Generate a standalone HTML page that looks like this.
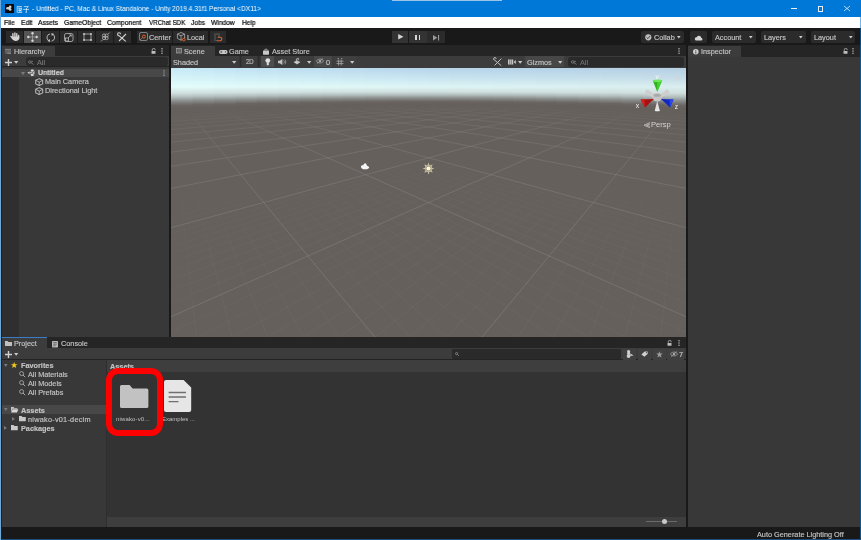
<!DOCTYPE html>
<html><head><meta charset="utf-8">
<style>
*{margin:0;padding:0;box-sizing:border-box}
html,body{width:861px;height:540px;overflow:hidden;background:#191919}
body{position:relative;font-family:"Liberation Sans",sans-serif}
.a{position:absolute}
.t{position:absolute;white-space:nowrap;line-height:1;font-size:7.3px;color:#c4c4c4;will-change:transform;-webkit-text-stroke:0.15px currentColor}
.b{font-weight:bold}
.m{font-size:7px;color:#000;transform-origin:0 0;transform:scaleX(0.95);-webkit-text-stroke:0.2px #000}
svg{position:absolute;overflow:visible}
</style></head><body>

<!-- title bar -->
<div class="a" style="left:0;top:0;width:861px;height:17px;background:#0078d7"></div>
<div class="a" style="left:392px;top:0;width:110px;height:1px;background:#9cc3ea"></div>
<div class="a" style="left:5.1px;top:4.3px;width:8.6px;height:8.3px;background:#080808"></div>
<svg style="left:5.1px;top:4.3px" width="8.6" height="8.3" viewBox="0 0 8.6 8.3"><g fill="#cfcfcf"><circle cx="2.5" cy="4.2" r="1.3"/><circle cx="5.2" cy="2.9" r="1.3"/><circle cx="5.2" cy="5.5" r="1.3"/><path d="M2.5 3.4 L5.2 2 L5.8 4.2 L5.2 6.4 L2.5 5Z"/></g></svg>
<!-- CJK chars drawn -->
<svg style="left:16px;top:5.5px" width="14" height="7" viewBox="0 0 14 7"><g fill="none" stroke="#fff" stroke-width="0.65"><path d="M1 0.6H6M1.2 0.6V6.6M2 2.2H5.6V4.2H2M3.8 2.2V6.2M1.6 6.4H6.2M4 4.2L5.6 5.4"/><path d="M7.8 0.6H12.4L10.4 2.4V6.6L9.4 6.2M7.2 3.4H13"/></g></svg>
<div class="t" style="left:32.2px;top:5px;font-size:7px;color:#fff;-webkit-text-stroke:0;transform-origin:0 0;transform:scaleX(0.948)">- Untitled - PC, Mac &amp; Linux Standalone - Unity 2019.4.31f1 Personal &lt;DX11&gt;</div>
<div class="a" style="left:791px;top:8.2px;width:6px;height:0.8px;background:#f2f2f2"></div>
<div class="a" style="left:817.6px;top:5.8px;width:5.3px;height:5.8px;border:0.7px solid #e6eef8"></div>
<svg style="left:844px;top:6px" width="6" height="6" viewBox="0 0 6 6"><path d="M0 0L6 5M6 0L0 5" stroke="#f2f2f2" stroke-width="0.75"/></svg>

<!-- menu bar -->
<div class="a" style="left:0;top:17px;width:861px;height:11px;background:#fff"></div>
<div class="t m" style="left:4.2px;top:19.3px">File</div>
<div class="t m" style="left:20.9px;top:19.3px">Edit</div>
<div class="t m" style="left:38.3px;top:19.3px">Assets</div>
<div class="t m" style="left:63.8px;top:19.3px">GameObject</div>
<div class="t m" style="left:107.3px;top:19.3px">Component</div>
<div class="t m" style="left:149.1px;top:19.3px;transform:scaleX(0.89)">VRChat SDK</div>
<div class="t m" style="left:191px;top:19.3px">Jobs</div>
<div class="t m" style="left:210.8px;top:19.3px">Window</div>
<div class="t m" style="left:242.2px;top:19.3px">Help</div>

<!-- main toolbar -->
<div class="a" style="left:6px;top:31px;width:17px;height:12px;background:#2b2b2b"></div>
<div class="a" style="left:24px;top:31px;width:17px;height:12px;background:#555"></div>
<div class="a" style="left:42px;top:31px;width:17px;height:12px;background:#2b2b2b"></div>
<div class="a" style="left:60px;top:31px;width:17px;height:12px;background:#2b2b2b"></div>
<div class="a" style="left:78px;top:31px;width:17px;height:12px;background:#2b2b2b"></div>
<div class="a" style="left:96px;top:31px;width:17px;height:12px;background:#2b2b2b"></div>
<div class="a" style="left:114px;top:31px;width:17px;height:12px;background:#2b2b2b"></div>
<div class="a" style="left:137px;top:31px;width:35px;height:12px;background:#2b2b2b"></div>
<div class="a" style="left:173px;top:31px;width:35px;height:12px;background:#2b2b2b"></div>
<div class="a" style="left:210px;top:31px;width:16px;height:12px;background:#2b2b2b"></div>
<div class="t" style="left:148.5px;top:33.5px;color:#c4c4c4">Center</div>
<div class="t" style="left:186.5px;top:33.5px;color:#c4c4c4">Local</div>

<div class="a" style="left:391.8px;top:31.3px;width:16.4px;height:11.7px;background:#333333"></div>
<div class="a" style="left:409.2px;top:31.3px;width:17.6px;height:11.7px;background:#333333"></div>
<div class="a" style="left:427.3px;top:31.3px;width:18px;height:11.7px;background:#2b2b2b"></div>

<div class="a" style="left:641px;top:31px;width:43px;height:12px;background:#2b2b2b;border-radius:2px"></div>
<div class="a" style="left:690px;top:31px;width:17px;height:12px;background:#2b2b2b;border-radius:2px"></div>
<div class="a" style="left:712px;top:31px;width:44px;height:12px;background:#2b2b2b;border-radius:2px"></div>
<div class="a" style="left:761px;top:31px;width:45px;height:12px;background:#2b2b2b;border-radius:2px"></div>
<div class="a" style="left:811px;top:31px;width:44px;height:12px;background:#2b2b2b;border-radius:2px"></div>
<div class="t" style="left:654px;top:33.5px">Collab</div>
<div class="t" style="left:715px;top:33.5px">Account</div>
<div class="t" style="left:764px;top:33.5px">Layers</div>
<div class="t" style="left:814px;top:33.5px">Layout</div>


<!-- toolbar icons -->
<svg style="left:9.6px;top:32px" width="10" height="9.4" viewBox="0 0 10 9.4"><g stroke="#d6d6d6" stroke-linecap="round" fill="none"><path d="M2.9 4.6 V1.6 M4.9 4.4 V0.9 M6.8 4.6 V1.7 M8.6 5.4 V3.4 M1 4.4 L2.6 6.6" stroke-width="1.4"/></g><path d="M2.2 4.4 H9.3 V6.4 C9 8 7.6 8.9 5.6 8.9 C4 8.9 3 8.2 2.2 6.8Z" fill="#d6d6d6"/></svg>
<svg style="left:27px;top:32px" width="11" height="10" viewBox="0 0 11 10"><g fill="#d8d8d8"><circle cx="5.5" cy="1.3" r="1.2"/><circle cx="5.5" cy="8.7" r="1.2"/><circle cx="1.3" cy="5" r="1.2"/><circle cx="9.7" cy="5" r="1.2"/></g><path d="M5.5 2v6M2 5h7" stroke="#cfcfcf" stroke-width="0.45"/></svg>
<svg style="left:45.8px;top:32.6px" width="9.6" height="9" viewBox="0 0 9.6 9"><g fill="none" stroke="#c4c4c4" stroke-width="0.9"><path d="M2.6 7.6 A3.7 3.7 0 0 1 4 0.9"/><path d="M7 1.4 A3.7 3.7 0 0 1 5.6 8.1"/></g><g fill="#c4c4c4"><path d="M5.4 0 L8.2 1 L5.8 2.9Z"/><path d="M4.2 9 L1.4 8 L3.8 6.1Z"/></g></svg>
<svg style="left:64px;top:32.5px" width="9.5" height="9" viewBox="0 0 9.5 9"><g fill="none" stroke="#bdbdbd" stroke-width="0.8"><rect x="0.5" y="0.5" width="8.5" height="8" rx="1.8"/><rect x="1.5" y="5" width="3" height="3"/><path d="M4 5 L7.2 1.9 M5.3 1.9 H7.2 V3.8"/></g></svg>
<svg style="left:82.5px;top:33px" width="9" height="8" viewBox="0 0 9 8"><g fill="none" stroke="#bdbdbd" stroke-width="0.8"><rect x="1" y="1" width="7" height="6"/></g><g fill="#d0d0d0"><circle cx="1" cy="1" r="0.9"/><circle cx="8" cy="1" r="0.9"/><circle cx="1" cy="7" r="0.9"/><circle cx="8" cy="7" r="0.9"/></g></svg>
<svg style="left:99.5px;top:32px" width="10.5" height="10" viewBox="0 0 10.5 10"><g fill="none" stroke="#bdbdbd" stroke-width="0.75"><circle cx="4" cy="3.5" r="1.6"/><circle cx="6.6" cy="3.5" r="1.6"/><circle cx="4" cy="6.1" r="1.6"/><circle cx="6.6" cy="6.1" r="1.6"/><path d="M1 9.4 L2.6 7.8 M8.2 2 L9.6 0.6"/></g></svg>
<svg style="left:118px;top:32.5px" width="9" height="9" viewBox="0 0 9 9"><g fill="none" stroke="#d0d0d0" stroke-width="1.1"><path d="M1 8 L8 1"/><path d="M2.6 1.2 A1.5 1.5 0 1 0 1.2 2.8 L7.8 8.4"/></g></svg>
<svg style="left:139px;top:32.3px" width="9" height="9" viewBox="0 0 9 9"><rect x="0.5" y="0.5" width="8" height="8" rx="1.6" fill="none" stroke="#9a9a9a" stroke-width="0.8"/><circle cx="4.9" cy="4.6" r="1.5" fill="none" stroke="#e2622b" stroke-width="1"/><path d="M0.8 8.2L3.6 5.6" stroke="#9a9a9a" stroke-width="0.6"/></svg>
<svg style="left:176.6px;top:32.2px" width="9.5" height="10" viewBox="0 0 9.5 10"><g fill="none" stroke="#b0b0b0" stroke-width="0.8"><path d="M4 0.5 L7.6 2.1 V6.4 L4 8.2 L0.4 6.4 V2.1 Z M0.4 2.1 L4 3.8 L7.6 2.1 M4 3.8 V8.2"/></g><circle cx="6.8" cy="7.6" r="1.3" fill="#2b2b2b" stroke="#e2622b" stroke-width="1"/></svg>
<svg style="left:214.2px;top:32.8px" width="9" height="9" viewBox="0 0 9 9"><g fill="#a0a0a0"><circle cx="1" cy="1" r="0.55"/><circle cx="3" cy="1" r="0.55"/><circle cx="5" cy="1" r="0.55"/><circle cx="1" cy="3" r="0.55"/><circle cx="5" cy="3" r="0.55"/><circle cx="1" cy="5" r="0.55"/><circle cx="1" cy="7" r="0.55"/><circle cx="3" cy="7.6" r="0.55"/></g><path d="M3.6 4.2 H6 A1.8 1.8 0 0 1 6 7.8 H3.6" fill="none" stroke="#e2622b" stroke-width="1.1"/></svg>
<svg style="left:397.8px;top:34.3px" width="6" height="6" viewBox="0 0 6 6"><path d="M0.2 0 L5.4 2.8 L0.2 5.6Z" fill="#d6d6d6"/></svg>
<div class="a" style="left:415px;top:34.5px;width:1.7px;height:5.4px;background:#d6d6d6"></div>
<div class="a" style="left:418.7px;top:34.5px;width:1.7px;height:5.4px;background:#d6d6d6"></div>
<svg style="left:432.5px;top:34.5px" width="7" height="6" viewBox="0 0 7 6"><path d="M0 0 L4.4 2.7 L0 5.4Z M5 0 H6.1 V5.4 H5Z" fill="#9a9a9a"/></svg>
<svg style="left:645px;top:34px" width="7" height="7" viewBox="0 0 7 7"><circle cx="3.3" cy="3.3" r="3.1" fill="#bdbdbd"/><path d="M1.6 3.4 L2.9 4.6 L5 2" fill="none" stroke="#3a3a3a" stroke-width="0.9"/></svg>
<svg style="left:694px;top:34.5px" width="9" height="6" viewBox="0 0 9 6"><path d="M1.8 5.6 H7.4 A1.5 1.5 0 0 0 7.2 2.7 A2.4 2.4 0 0 0 2.6 2.2 A1.8 1.8 0 0 0 1.8 5.6Z" fill="#d6d6d6"/></svg>
<svg style="left:677px;top:35.8px" width="4" height="3" viewBox="0 0 4 3"><path d="M0 0H3.6L1.8 2.4Z" fill="#cfcfcf"/></svg>
<svg style="left:749px;top:35.8px" width="4" height="3" viewBox="0 0 4 3"><path d="M0 0H3.6L1.8 2.4Z" fill="#cfcfcf"/></svg>
<svg style="left:798.7px;top:35.8px" width="4" height="3" viewBox="0 0 4 3"><path d="M0 0H3.6L1.8 2.4Z" fill="#cfcfcf"/></svg>
<svg style="left:848.6px;top:35.8px" width="4" height="3" viewBox="0 0 4 3"><path d="M0 0H3.6L1.8 2.4Z" fill="#cfcfcf"/></svg>

<!-- ===== Hierarchy ===== -->
<div class="a" style="left:1px;top:45px;width:168px;height:292px;background:#383838"></div>
<div class="a" style="left:1px;top:45px;width:168px;height:11px;background:#252525"></div>
<div class="a" style="left:1px;top:46px;width:54px;height:10px;background:#3c3c3c"></div>
<div class="t" style="left:13.5px;top:48px">Hierarchy</div>
<div class="a" style="left:1px;top:56px;width:168px;height:11px;background:#3c3c3c;border-bottom:1px solid #232323"></div>
<div class="a" style="left:25.7px;top:57.1px;width:142.2px;height:9.2px;background:#2a2a2a;border-radius:3px"></div>
<div class="t" style="left:37px;top:58.5px;color:#777">All</div>
<div class="a" style="left:1px;top:76.6px;width:17.7px;height:260.4px;background:#2f2f2f"></div>
<div class="a" style="left:1px;top:68.5px;width:168px;height:8.5px;background:#484848"></div>
<div class="t b" style="left:37.7px;top:68.7px;color:#d6d6d6;transform-origin:0 0;transform:scaleX(0.95)">Untitled</div>
<div class="t" style="left:44.7px;top:78.3px">Main Camera</div>
<div class="t" style="left:44.7px;top:87.3px">Directional Light</div>


<!-- hierarchy icons -->
<svg style="left:5.2px;top:48.9px" width="6" height="5" viewBox="0 0 6 5"><g stroke="#a8a8a8" stroke-width="0.65"><path d="M0 0.35H6M1 0.35V4.8M2.2 1.9H6M2.2 3.2H6M2.2 4.5H6"/></g></svg>
<svg style="left:150.7px;top:48px" width="5" height="6" viewBox="0 0 5 6"><path d="M1.2 2.8 V1.9 A1.5 1.5 0 0 1 4.2 1.9 V2.2" fill="none" stroke="#bdbdbd" stroke-width="0.8"/><rect x="0.5" y="2.9" width="4" height="2.8" rx="0.3" fill="#bdbdbd"/></svg>
<svg style="left:161.2px;top:48px" width="2" height="6" viewBox="0 0 2 6"><g fill="#c8c8c8"><circle cx="1" cy="0.8" r="0.7"/><circle cx="1" cy="3" r="0.7"/><circle cx="1" cy="5.2" r="0.7"/></g></svg>
<svg style="left:4.7px;top:59px" width="7" height="7" viewBox="0 0 7 7"><path d="M3.5 0V7M0 3.5H7" stroke="#d0d0d0" stroke-width="1.4"/></svg>
<svg style="left:14px;top:61px" width="4.4" height="3" viewBox="0 0 4.4 3"><path d="M0 0H4.4L2.2 2.8Z" fill="#c8c8c8"/></svg>
<svg style="left:28px;top:59.5px" width="6" height="5" viewBox="0 0 6 5"><circle cx="1.8" cy="2" r="1.3" fill="none" stroke="#8a8a8a" stroke-width="0.7"/><path d="M2.8 2.6L5.6 4.4M3.2 1.4H5" stroke="#8a8a8a" stroke-width="0.7"/></svg>
<svg style="left:20.6px;top:71.5px" width="4" height="3.2" viewBox="0 0 4 3.2"><path d="M0 0H4L2 3.2Z" fill="#7c7c7c"/></svg>
<svg style="left:26.8px;top:69.2px" width="7.6" height="7.4" viewBox="0 0 7.6 7.4"><g fill="#dcdcdc"><path d="M0.3 3.7 L2.6 2.4 L2.6 5 Z"/><path d="M4.6 0.2 L7.3 1.1 L5.6 2.8 L3.4 2.2Z"/><path d="M4.6 7.2 L7.3 6.3 L5.6 4.6 L3.4 5.2Z"/><path d="M6.2 3 L7.4 1.8 V5.6 L6.2 4.4Z"/><path d="M2.8 3.2 H5.2 L5.6 3.7 L5.2 4.2 H2.8Z"/></g></svg>
<svg style="left:34.8px;top:77.9px" width="8.4" height="8.2" viewBox="0 0 8.4 8.2"><g fill="none" stroke="#b8b8b8" stroke-width="1.05" stroke-linejoin="round"><path d="M4.2 0.6 L7.7 2.3 V5.9 L4.2 7.6 L0.7 5.9 V2.3 Z"/><path d="M0.9 2.4 L4.2 4.1 L7.5 2.4 M4.2 4.1 V7.4" stroke-width="0.9"/></g></svg>
<svg style="left:34.8px;top:86.9px" width="8.4" height="8.2" viewBox="0 0 8.4 8.2"><g fill="none" stroke="#b8b8b8" stroke-width="1.05" stroke-linejoin="round"><path d="M4.2 0.6 L7.7 2.3 V5.9 L4.2 7.6 L0.7 5.9 V2.3 Z"/><path d="M0.9 2.4 L4.2 4.1 L7.5 2.4 M4.2 4.1 V7.4" stroke-width="0.9"/></g></svg>
<svg style="left:163px;top:70.2px" width="2" height="6" viewBox="0 0 2 6"><g fill="#c8c8c8"><circle cx="1" cy="0.8" r="0.6"/><circle cx="1" cy="3" r="0.6"/><circle cx="1" cy="5.2" r="0.6"/></g></svg>

<!-- divider hierarchy/scene -->
<div class="a" style="left:169px;top:45px;width:2px;height:292px;background:#191919"></div>

<!-- ===== Scene ===== -->
<div class="a" style="left:171px;top:45px;width:515px;height:11px;background:#252525"></div>
<div class="a" style="left:171px;top:46px;width:44px;height:10px;background:#3c3c3c"></div>
<div class="t" style="left:184px;top:48px">Scene</div>
<div class="t" style="left:229px;top:48px">Game</div>
<div class="t" style="left:271.5px;top:48px">Asset Store</div>
<div class="a" style="left:171px;top:56px;width:515px;height:12px;background:#3c3c3c"></div>
<div class="t" style="left:173px;top:58.5px">Shaded</div>
<div class="t" style="left:245.9px;top:58.6px;font-size:6.8px;transform-origin:0 0;transform:scaleX(0.88)">2D</div>
<div class="a" style="left:568px;top:57px;width:116px;height:10px;background:#2a2a2a;border-radius:3px"></div>


<!-- scene tab/toolbar icons -->
<svg style="left:175.7px;top:48.4px" width="6" height="5.4" viewBox="0 0 6 5.4"><g fill="none" stroke="#a8a8a8" stroke-width="0.7"><rect x="0.4" y="0.4" width="5.2" height="4.6"/><path d="M2.1 0.4V5M3.9 0.4V5"/></g></svg>
<svg style="left:218.8px;top:50px" width="8.6" height="4" viewBox="0 0 8.6 4"><rect x="0" y="0" width="8.6" height="3.9" rx="1.9" fill="#c8c8c8"/><path d="M1.3 1.9H3.3M2.3 0.9V2.9" stroke="#3a3a3a" stroke-width="0.6"/><circle cx="6.4" cy="1.9" r="0.6" fill="#3a3a3a"/></svg>
<svg style="left:263px;top:48.6px" width="6" height="5.8" viewBox="0 0 6 5.8"><path d="M1.5 1.6V1.2A1.5 1.1 0 0 1 4.5 1.2V1.6" fill="none" stroke="#c8c8c8" stroke-width="0.7"/><rect x="0" y="1.6" width="6" height="4.2" rx="0.5" fill="#c8c8c8"/></svg>
<svg style="left:232.2px;top:60.6px" width="4.4" height="3" viewBox="0 0 4.4 3"><path d="M0 0H4.4L2.2 2.8Z" fill="#c8c8c8"/></svg>
<div class="a" style="left:238.6px;top:56.2px;width:3.6px;height:11.1px;background:#353535"></div><div class="a" style="left:239.6px;top:56.2px;width:1.2px;height:11.1px;background:#2c2c2c"></div>
<div class="a" style="left:257.2px;top:56.2px;width:3.6px;height:11.1px;background:#353535"></div><div class="a" style="left:258.3px;top:56.2px;width:1.2px;height:11.1px;background:#2c2c2c"></div>
<div class="a" style="left:260.9px;top:56.2px;width:13.6px;height:11.1px;background:#4d4d4d"></div>
<svg style="left:264.9px;top:57.8px" width="5.6" height="8" viewBox="0 0 5.6 8"><circle cx="2.8" cy="2.6" r="2.4" fill="#e2e2e2"/><rect x="1.8" y="4.6" width="2" height="2.6" fill="#e2e2e2"/></svg>
<svg style="left:278px;top:58.6px" width="8.4" height="6" viewBox="0 0 8.4 6"><path d="M0 1.8H1.8L4.4 0V6L1.8 4.2H0Z" fill="#c4c4c4"/><path d="M5.6 1.4A2 2 0 0 1 5.6 4.6M6.8 0.6A3.2 3.2 0 0 1 6.8 5.4" fill="none" stroke="#c4c4c4" stroke-width="0.6"/></svg>
<svg style="left:292.6px;top:58.2px" width="8" height="7" viewBox="0 0 8 7"><path d="M0.5 4 L4 6.6 L7.5 4 L4 2.4Z" fill="#c4c4c4"/><path d="M3.4 3 V1 M3.4 1 L5.6 0.4 L5.2 2.2" fill="none" stroke="#c4c4c4" stroke-width="0.8"/></svg>
<svg style="left:307.3px;top:60.8px" width="4.4" height="3" viewBox="0 0 4.4 3"><path d="M0 0H4.4L2.2 2.8Z" fill="#c8c8c8"/></svg>
<div class="a" style="left:314.2px;top:56.2px;width:17.5px;height:11.1px;background:#474747"></div>
<svg style="left:316px;top:58.4px" width="8" height="6" viewBox="0 0 8 6"><path d="M0.3 3 C2 0.4 6 0.4 7.7 3 C6 5.6 2 5.6 0.3 3Z" fill="none" stroke="#a8a8a8" stroke-width="0.7"/><circle cx="4" cy="3" r="1.2" fill="#a8a8a8"/><path d="M1 5.6L7 0.4" stroke="#a8a8a8" stroke-width="0.7"/></svg>
<div class="t" style="left:325.5px;top:58.6px;color:#c4c4c4">0</div>
<div class="a" style="left:333.7px;top:56.2px;width:22.3px;height:11.1px;background:#3f3f3f"></div>
<svg style="left:336px;top:57.8px" width="8" height="8" viewBox="0 0 8 8"><g fill="none" stroke="#b4b4b4" stroke-width="0.7"><path d="M0.5 3.2H7.5M0.5 5.6H7.5M2.6 1.6V7.6M5.2 1.6V7.6M1.6 0.6L3 0.6M5 0.6H6.4"/></g></svg>
<svg style="left:349.6px;top:60.8px" width="4.4" height="3" viewBox="0 0 4.4 3"><path d="M0 0H4.4L2.2 2.8Z" fill="#c8c8c8"/></svg>
<svg style="left:494px;top:58px" width="8" height="8" viewBox="0 0 8 8"><g fill="none" stroke="#c8c8c8" stroke-width="0.95"><path d="M0.6 7.4 L7.4 0.6"/><path d="M2.2 0.8 A1.3 1.3 0 1 0 0.8 2.2 L7.2 7.6"/></g></svg>
<svg style="left:507.6px;top:59px" width="8" height="6" viewBox="0 0 8 6"><rect x="0" y="0.5" width="5.2" height="5" fill="#c8c8c8"/><path d="M5.6 3 L7.8 1 V5Z" fill="#c8c8c8"/><path d="M1.7 0.5V5.5M3.4 0.5V5.5" stroke="#3c3c3c" stroke-width="0.5"/></svg>
<svg style="left:517.6px;top:60.8px" width="4.4" height="3" viewBox="0 0 4.4 3"><path d="M0 0H4.4L2.2 2.8Z" fill="#c8c8c8"/></svg>
<div class="a" style="left:524.6px;top:56.2px;width:39.4px;height:11.1px;background:#474747"></div>
<div class="t" style="left:527px;top:58.5px">Gizmos</div>
<svg style="left:557.6px;top:60.8px" width="4.4" height="3" viewBox="0 0 4.4 3"><path d="M0 0H4.4L2.2 2.8Z" fill="#c8c8c8"/></svg>
<svg style="left:571px;top:59.5px" width="6" height="5" viewBox="0 0 6 5"><circle cx="1.8" cy="2" r="1.3" fill="none" stroke="#8a8a8a" stroke-width="0.7"/><path d="M2.8 2.6L5.6 4.4M3.2 1.4H5" stroke="#8a8a8a" stroke-width="0.7"/></svg>
<div class="t" style="left:579.5px;top:58.6px;color:#6e6e6e">All</div>
<svg style="left:678px;top:47.8px" width="2" height="6" viewBox="0 0 2 6"><g fill="#c8c8c8"><circle cx="1" cy="0.8" r="0.7"/><circle cx="1" cy="3" r="0.7"/><circle cx="1" cy="5.2" r="0.7"/></g></svg>

<div class="a" style="left:171px;top:68px;width:515px;height:269px;overflow:hidden;
background:linear-gradient(to bottom,#c4e9f8 0px,#c8edfa 3px,#d4f4fc 12px,#e2fbff 21px,#d4e6e3 25px,#b2bebc 29px,#949a98 33px,#7a7672 37px,#67625f 40px,#65605c 100%)">
<svg style="left:0;top:0" width="515" height="269"><defs><linearGradient id="s0" x1="0" y1="0" x2="0" y2="1"><stop offset="0.0000" stop-color="#c6e7f6"/><stop offset="0.0367" stop-color="#d4f4f9"/><stop offset="0.0700" stop-color="#e3fcfb"/><stop offset="0.0938" stop-color="#cfdfdd"/><stop offset="0.1081" stop-color="#b0bcbc"/><stop offset="0.1223" stop-color="#8a8e8c"/><stop offset="0.1390" stop-color="#6a6562"/><stop offset="0.1509" stop-color="#65605c"/></linearGradient><linearGradient id="s1" x1="0" y1="0" x2="0" y2="1"><stop offset="0.0000" stop-color="#c4e5f5"/><stop offset="0.0380" stop-color="#d4f3f8"/><stop offset="0.0701" stop-color="#e3fcfa"/><stop offset="0.0930" stop-color="#cfdfdd"/><stop offset="0.1068" stop-color="#b0bcbc"/><stop offset="0.1205" stop-color="#8a8e8c"/><stop offset="0.1366" stop-color="#6a6562"/><stop offset="0.1480" stop-color="#65605c"/></linearGradient><linearGradient id="s2" x1="0" y1="0" x2="0" y2="1"><stop offset="0.0000" stop-color="#c2e3f4"/><stop offset="0.0392" stop-color="#d3f2f8"/><stop offset="0.0702" stop-color="#e2fbfa"/><stop offset="0.0923" stop-color="#cfdfdd"/><stop offset="0.1056" stop-color="#b0bcbc"/><stop offset="0.1189" stop-color="#8a8e8c"/><stop offset="0.1344" stop-color="#6a6562"/><stop offset="0.1455" stop-color="#65605c"/></linearGradient><linearGradient id="s3" x1="0" y1="0" x2="0" y2="1"><stop offset="0.0000" stop-color="#c1e2f3"/><stop offset="0.0017" stop-color="#c1e2f3"/><stop offset="0.0403" stop-color="#d2f1f7"/><stop offset="0.0703" stop-color="#e2faf9"/><stop offset="0.0917" stop-color="#cfdfdd"/><stop offset="0.1046" stop-color="#b0bcbc"/><stop offset="0.1174" stop-color="#8a8e8c"/><stop offset="0.1324" stop-color="#6a6562"/><stop offset="0.1431" stop-color="#65605c"/></linearGradient><linearGradient id="s4" x1="0" y1="0" x2="0" y2="1"><stop offset="0.0000" stop-color="#c0e0f2"/><stop offset="0.0038" stop-color="#c1e1f2"/><stop offset="0.0413" stop-color="#d2f0f6"/><stop offset="0.0704" stop-color="#e2faf9"/><stop offset="0.0912" stop-color="#cfdfdd"/><stop offset="0.1036" stop-color="#b0bcbc"/><stop offset="0.1161" stop-color="#8a8e8c"/><stop offset="0.1307" stop-color="#6a6562"/><stop offset="0.1411" stop-color="#65605c"/></linearGradient><linearGradient id="s5" x1="0" y1="0" x2="0" y2="1"><stop offset="0.0000" stop-color="#bedff0"/><stop offset="0.0056" stop-color="#c0e0f1"/><stop offset="0.0421" stop-color="#d1eff5"/><stop offset="0.0704" stop-color="#e1f9f8"/><stop offset="0.0907" stop-color="#cfdfdd"/><stop offset="0.1028" stop-color="#b0bcbc"/><stop offset="0.1150" stop-color="#8a8e8c"/><stop offset="0.1291" stop-color="#6a6562"/><stop offset="0.1393" stop-color="#65605c"/></linearGradient><linearGradient id="s6" x1="0" y1="0" x2="0" y2="1"><stop offset="0.0000" stop-color="#bdddef"/><stop offset="0.0072" stop-color="#bfdff1"/><stop offset="0.0428" stop-color="#d0eef5"/><stop offset="0.0705" stop-color="#e1f9f8"/><stop offset="0.0903" stop-color="#cfdfdd"/><stop offset="0.1021" stop-color="#b0bcbc"/><stop offset="0.1140" stop-color="#8a8e8c"/><stop offset="0.1278" stop-color="#6a6562"/><stop offset="0.1377" stop-color="#65605c"/></linearGradient><linearGradient id="s7" x1="0" y1="0" x2="0" y2="1"><stop offset="0.0000" stop-color="#bcdcee"/><stop offset="0.0085" stop-color="#bfdef0"/><stop offset="0.0434" stop-color="#d0edf4"/><stop offset="0.0705" stop-color="#e0f8f7"/><stop offset="0.0899" stop-color="#cfdfdd"/><stop offset="0.1015" stop-color="#b0bcbc"/><stop offset="0.1132" stop-color="#8a8e8c"/><stop offset="0.1267" stop-color="#6a6562"/><stop offset="0.1364" stop-color="#65605c"/></linearGradient><linearGradient id="s8" x1="0" y1="0" x2="0" y2="1"><stop offset="0.0000" stop-color="#bbdaed"/><stop offset="0.0096" stop-color="#beddef"/><stop offset="0.0439" stop-color="#cfecf3"/><stop offset="0.0706" stop-color="#e0f7f7"/><stop offset="0.0896" stop-color="#cfdfdd"/><stop offset="0.1011" stop-color="#b0bcbc"/><stop offset="0.1125" stop-color="#8a8e8c"/><stop offset="0.1259" stop-color="#6a6562"/><stop offset="0.1354" stop-color="#65605c"/></linearGradient><linearGradient id="s9" x1="0" y1="0" x2="0" y2="1"><stop offset="0.0000" stop-color="#bad9ed"/><stop offset="0.0103" stop-color="#bddcee"/><stop offset="0.0442" stop-color="#ceebf2"/><stop offset="0.0706" stop-color="#e0f7f6"/><stop offset="0.0894" stop-color="#cfdfdd"/><stop offset="0.1007" stop-color="#b0bcbc"/><stop offset="0.1120" stop-color="#8a8e8c"/><stop offset="0.1252" stop-color="#6a6562"/><stop offset="0.1346" stop-color="#65605c"/></linearGradient><linearGradient id="s10" x1="0" y1="0" x2="0" y2="1"><stop offset="0.0000" stop-color="#bad8ec"/><stop offset="0.0109" stop-color="#bddbee"/><stop offset="0.0445" stop-color="#ceeaf2"/><stop offset="0.0706" stop-color="#dff6f6"/><stop offset="0.0893" stop-color="#cfdfdd"/><stop offset="0.1005" stop-color="#b0bcbc"/><stop offset="0.1117" stop-color="#8a8e8c"/><stop offset="0.1248" stop-color="#6a6562"/><stop offset="0.1341" stop-color="#65605c"/></linearGradient><linearGradient id="s11" x1="0" y1="0" x2="0" y2="1"><stop offset="0.0000" stop-color="#b9d7eb"/><stop offset="0.0111" stop-color="#bcdaed"/><stop offset="0.0446" stop-color="#cde9f1"/><stop offset="0.0706" stop-color="#dff5f5"/><stop offset="0.0892" stop-color="#cfdfdd"/><stop offset="0.1004" stop-color="#b0bcbc"/><stop offset="0.1115" stop-color="#8a8e8c"/><stop offset="0.1246" stop-color="#6a6562"/><stop offset="0.1339" stop-color="#65605c"/></linearGradient><linearGradient id="s12" x1="0" y1="0" x2="0" y2="1"><stop offset="0.0000" stop-color="#b8d6ea"/><stop offset="0.0111" stop-color="#bbd9ec"/><stop offset="0.0446" stop-color="#cce8f0"/><stop offset="0.0706" stop-color="#def5f5"/><stop offset="0.0892" stop-color="#cfdfdd"/><stop offset="0.1004" stop-color="#b0bcbc"/><stop offset="0.1115" stop-color="#8a8e8c"/><stop offset="0.1246" stop-color="#6a6562"/><stop offset="0.1339" stop-color="#65605c"/></linearGradient><linearGradient id="s13" x1="0" y1="0" x2="0" y2="1"><stop offset="0.0000" stop-color="#b8d5e9"/><stop offset="0.0109" stop-color="#bbd8eb"/><stop offset="0.0445" stop-color="#cce7ef"/><stop offset="0.0706" stop-color="#def4f4"/><stop offset="0.0893" stop-color="#cfdfdd"/><stop offset="0.1005" stop-color="#b0bcbc"/><stop offset="0.1117" stop-color="#8a8e8c"/><stop offset="0.1248" stop-color="#6a6562"/><stop offset="0.1341" stop-color="#65605c"/></linearGradient><linearGradient id="s14" x1="0" y1="0" x2="0" y2="1"><stop offset="0.0000" stop-color="#b7d4e9"/><stop offset="0.0103" stop-color="#bad7eb"/><stop offset="0.0442" stop-color="#cbe6ef"/><stop offset="0.0706" stop-color="#ddf4f4"/><stop offset="0.0894" stop-color="#cfdfdd"/><stop offset="0.1007" stop-color="#b0bcbc"/><stop offset="0.1120" stop-color="#8a8e8c"/><stop offset="0.1252" stop-color="#6a6562"/><stop offset="0.1346" stop-color="#65605c"/></linearGradient><linearGradient id="s15" x1="0" y1="0" x2="0" y2="1"><stop offset="0.0000" stop-color="#b7d3e8"/><stop offset="0.0096" stop-color="#b9d6ea"/><stop offset="0.0439" stop-color="#cae5ee"/><stop offset="0.0706" stop-color="#ddf3f3"/><stop offset="0.0896" stop-color="#cfdfdd"/><stop offset="0.1011" stop-color="#b0bcbc"/><stop offset="0.1125" stop-color="#8a8e8c"/><stop offset="0.1259" stop-color="#6a6562"/><stop offset="0.1354" stop-color="#65605c"/></linearGradient><linearGradient id="s16" x1="0" y1="0" x2="0" y2="1"><stop offset="0.0000" stop-color="#b6d3e8"/><stop offset="0.0085" stop-color="#b9d5e9"/><stop offset="0.0434" stop-color="#cae4ed"/><stop offset="0.0705" stop-color="#ddf2f3"/><stop offset="0.0899" stop-color="#cfdfdd"/><stop offset="0.1015" stop-color="#b0bcbc"/><stop offset="0.1132" stop-color="#8a8e8c"/><stop offset="0.1267" stop-color="#6a6562"/><stop offset="0.1364" stop-color="#65605c"/></linearGradient><linearGradient id="s17" x1="0" y1="0" x2="0" y2="1"><stop offset="0.0000" stop-color="#b6d2e7"/><stop offset="0.0072" stop-color="#b8d4e8"/><stop offset="0.0428" stop-color="#c9e3ec"/><stop offset="0.0705" stop-color="#dcf2f3"/><stop offset="0.0903" stop-color="#cfdfdd"/><stop offset="0.1021" stop-color="#b0bcbc"/><stop offset="0.1140" stop-color="#8a8e8c"/><stop offset="0.1278" stop-color="#6a6562"/><stop offset="0.1377" stop-color="#65605c"/></linearGradient><linearGradient id="s18" x1="0" y1="0" x2="0" y2="1"><stop offset="0.0000" stop-color="#b6d2e7"/><stop offset="0.0056" stop-color="#b7d3e8"/><stop offset="0.0421" stop-color="#c8e2ec"/><stop offset="0.0704" stop-color="#dcf1f2"/><stop offset="0.0907" stop-color="#cfdfdd"/><stop offset="0.1028" stop-color="#b0bcbc"/><stop offset="0.1150" stop-color="#8a8e8c"/><stop offset="0.1291" stop-color="#6a6562"/><stop offset="0.1393" stop-color="#65605c"/></linearGradient><linearGradient id="s19" x1="0" y1="0" x2="0" y2="1"><stop offset="0.0000" stop-color="#b6d1e6"/><stop offset="0.0038" stop-color="#b7d2e7"/><stop offset="0.0413" stop-color="#c8e1eb"/><stop offset="0.0704" stop-color="#dbf0f2"/><stop offset="0.0912" stop-color="#cfdfdd"/><stop offset="0.1036" stop-color="#b0bcbc"/><stop offset="0.1161" stop-color="#8a8e8c"/><stop offset="0.1307" stop-color="#6a6562"/><stop offset="0.1411" stop-color="#65605c"/></linearGradient><linearGradient id="s20" x1="0" y1="0" x2="0" y2="1"><stop offset="0.0000" stop-color="#b5d1e6"/><stop offset="0.0017" stop-color="#b6d1e6"/><stop offset="0.0403" stop-color="#c7e0ea"/><stop offset="0.0703" stop-color="#dbf0f1"/><stop offset="0.0917" stop-color="#cfdfdd"/><stop offset="0.1046" stop-color="#b0bcbc"/><stop offset="0.1174" stop-color="#8a8e8c"/><stop offset="0.1324" stop-color="#6a6562"/><stop offset="0.1431" stop-color="#65605c"/></linearGradient><linearGradient id="s21" x1="0" y1="0" x2="0" y2="1"><stop offset="0.0000" stop-color="#b5d0e5"/><stop offset="0.0392" stop-color="#c6dfe9"/><stop offset="0.0702" stop-color="#dbeff1"/><stop offset="0.0923" stop-color="#cfdfdd"/><stop offset="0.1056" stop-color="#b0bcbc"/><stop offset="0.1189" stop-color="#8a8e8c"/><stop offset="0.1344" stop-color="#6a6562"/><stop offset="0.1455" stop-color="#65605c"/></linearGradient><linearGradient id="s22" x1="0" y1="0" x2="0" y2="1"><stop offset="0.0000" stop-color="#b6d0e5"/><stop offset="0.0380" stop-color="#c6dee9"/><stop offset="0.0701" stop-color="#daeff0"/><stop offset="0.0930" stop-color="#cfdfdd"/><stop offset="0.1068" stop-color="#b0bcbc"/><stop offset="0.1205" stop-color="#8a8e8c"/><stop offset="0.1366" stop-color="#6a6562"/><stop offset="0.1480" stop-color="#65605c"/></linearGradient><linearGradient id="s23" x1="0" y1="0" x2="0" y2="1"><stop offset="0.0000" stop-color="#b6d0e4"/><stop offset="0.0367" stop-color="#c5dde8"/><stop offset="0.0700" stop-color="#daeef0"/><stop offset="0.0938" stop-color="#cfdfdd"/><stop offset="0.1081" stop-color="#b0bcbc"/><stop offset="0.1223" stop-color="#8a8e8c"/><stop offset="0.1390" stop-color="#6a6562"/><stop offset="0.1509" stop-color="#65605c"/></linearGradient></defs><rect x="0.00" y="0" width="21.96" height="269" fill="url(#s0)"/><rect x="21.46" y="0" width="21.96" height="269" fill="url(#s1)"/><rect x="42.92" y="0" width="21.96" height="269" fill="url(#s2)"/><rect x="64.38" y="0" width="21.96" height="269" fill="url(#s3)"/><rect x="85.83" y="0" width="21.96" height="269" fill="url(#s4)"/><rect x="107.29" y="0" width="21.96" height="269" fill="url(#s5)"/><rect x="128.75" y="0" width="21.96" height="269" fill="url(#s6)"/><rect x="150.21" y="0" width="21.96" height="269" fill="url(#s7)"/><rect x="171.67" y="0" width="21.96" height="269" fill="url(#s8)"/><rect x="193.12" y="0" width="21.96" height="269" fill="url(#s9)"/><rect x="214.58" y="0" width="21.96" height="269" fill="url(#s10)"/><rect x="236.04" y="0" width="21.96" height="269" fill="url(#s11)"/><rect x="257.50" y="0" width="21.96" height="269" fill="url(#s12)"/><rect x="278.96" y="0" width="21.96" height="269" fill="url(#s13)"/><rect x="300.42" y="0" width="21.96" height="269" fill="url(#s14)"/><rect x="321.88" y="0" width="21.96" height="269" fill="url(#s15)"/><rect x="343.33" y="0" width="21.96" height="269" fill="url(#s16)"/><rect x="364.79" y="0" width="21.96" height="269" fill="url(#s17)"/><rect x="386.25" y="0" width="21.96" height="269" fill="url(#s18)"/><rect x="407.71" y="0" width="21.96" height="269" fill="url(#s19)"/><rect x="429.17" y="0" width="21.96" height="269" fill="url(#s20)"/><rect x="450.62" y="0" width="21.96" height="269" fill="url(#s21)"/><rect x="472.08" y="0" width="21.96" height="269" fill="url(#s22)"/><rect x="493.54" y="0" width="21.96" height="269" fill="url(#s23)"/><g stroke="#7f7a76" stroke-width="0.75"><line x1="397.1" y1="97.3" x2="445.2" y2="106.7" stroke-opacity="0.01"/><line x1="445.2" y1="106.7" x2="506.4" y2="118.7" stroke-opacity="0.02"/><line x1="506.4" y1="118.7" x2="587.0" y2="134.5" stroke-opacity="0.01"/><line x1="117.9" y1="97.3" x2="69.8" y2="106.7" stroke-opacity="0.01"/><line x1="69.8" y1="106.7" x2="8.6" y2="118.7" stroke-opacity="0.02"/><line x1="8.6" y1="118.7" x2="-72.0" y2="134.5" stroke-opacity="0.01"/><line x1="355.2" y1="91.2" x2="394.5" y2="99.1" stroke-opacity="0.01"/><line x1="394.5" y1="99.1" x2="443.4" y2="108.9" stroke-opacity="0.02"/><line x1="443.4" y1="108.9" x2="506.1" y2="121.5" stroke-opacity="0.03"/><line x1="506.1" y1="121.5" x2="589.3" y2="138.3" stroke-opacity="0.02"/><line x1="159.8" y1="91.2" x2="120.5" y2="99.1" stroke-opacity="0.01"/><line x1="120.5" y1="99.1" x2="71.6" y2="108.9" stroke-opacity="0.02"/><line x1="71.6" y1="108.9" x2="8.9" y2="121.5" stroke-opacity="0.03"/><line x1="8.9" y1="121.5" x2="-74.3" y2="138.3" stroke-opacity="0.02"/><line x1="351.9" y1="92.6" x2="391.7" y2="100.9" stroke-opacity="0.02"/><line x1="391.7" y1="100.9" x2="441.5" y2="111.2" stroke-opacity="0.03"/><line x1="441.5" y1="111.2" x2="505.7" y2="124.5" stroke-opacity="0.04"/><line x1="505.7" y1="124.5" x2="591.7" y2="142.3" stroke-opacity="0.04"/><line x1="163.1" y1="92.6" x2="123.3" y2="100.9" stroke-opacity="0.02"/><line x1="123.3" y1="100.9" x2="73.5" y2="111.2" stroke-opacity="0.03"/><line x1="73.5" y1="111.2" x2="9.3" y2="124.5" stroke-opacity="0.04"/><line x1="9.3" y1="124.5" x2="-76.7" y2="142.3" stroke-opacity="0.04"/><line x1="315.7" y1="87.1" x2="348.5" y2="94.1" stroke-opacity="0.01"/><line x1="348.5" y1="94.1" x2="388.8" y2="102.7" stroke-opacity="0.03"/><line x1="388.8" y1="102.7" x2="439.5" y2="113.6" stroke-opacity="0.05"/><line x1="439.5" y1="113.6" x2="505.4" y2="127.6" stroke-opacity="0.05"/><line x1="505.4" y1="127.6" x2="594.3" y2="146.6" stroke-opacity="0.05"/><line x1="199.3" y1="87.1" x2="166.5" y2="94.1" stroke-opacity="0.01"/><line x1="166.5" y1="94.1" x2="126.2" y2="102.7" stroke-opacity="0.03"/><line x1="126.2" y1="102.7" x2="75.5" y2="113.6" stroke-opacity="0.05"/><line x1="75.5" y1="113.6" x2="9.6" y2="127.6" stroke-opacity="0.05"/><line x1="9.6" y1="127.6" x2="-79.3" y2="146.6" stroke-opacity="0.05"/><line x1="311.9" y1="88.4" x2="345.0" y2="95.7" stroke-opacity="0.02"/><line x1="345.0" y1="95.7" x2="385.8" y2="104.7" stroke-opacity="0.04"/><line x1="385.8" y1="104.7" x2="437.5" y2="116.1" stroke-opacity="0.06"/><line x1="437.5" y1="116.1" x2="505.0" y2="131.0" stroke-opacity="0.06"/><line x1="505.0" y1="131.0" x2="597.1" y2="151.2" stroke-opacity="0.06"/><line x1="203.1" y1="88.4" x2="170.0" y2="95.7" stroke-opacity="0.02"/><line x1="170.0" y1="95.7" x2="129.2" y2="104.7" stroke-opacity="0.04"/><line x1="129.2" y1="104.7" x2="77.5" y2="116.1" stroke-opacity="0.06"/><line x1="77.5" y1="116.1" x2="10.0" y2="131.0" stroke-opacity="0.06"/><line x1="10.0" y1="131.0" x2="-82.1" y2="151.2" stroke-opacity="0.06"/><line x1="307.9" y1="89.8" x2="341.3" y2="97.3" stroke-opacity="0.03"/><line x1="341.3" y1="97.3" x2="382.6" y2="106.7" stroke-opacity="0.05"/><line x1="382.6" y1="106.7" x2="435.3" y2="118.7" stroke-opacity="0.07"/><line x1="435.3" y1="118.7" x2="504.6" y2="134.5" stroke-opacity="0.08"/><line x1="504.6" y1="134.5" x2="600.1" y2="156.2" stroke-opacity="0.07"/><line x1="207.1" y1="89.8" x2="173.7" y2="97.3" stroke-opacity="0.03"/><line x1="173.7" y1="97.3" x2="132.4" y2="106.7" stroke-opacity="0.05"/><line x1="132.4" y1="106.7" x2="79.7" y2="118.7" stroke-opacity="0.07"/><line x1="79.7" y1="118.7" x2="10.4" y2="134.5" stroke-opacity="0.08"/><line x1="10.4" y1="134.5" x2="-85.1" y2="156.2" stroke-opacity="0.07"/><line x1="276.2" y1="84.7" x2="303.8" y2="91.2" stroke-opacity="0.01"/><line x1="303.8" y1="91.2" x2="337.4" y2="99.1" stroke-opacity="0.04"/><line x1="337.4" y1="99.1" x2="379.3" y2="108.9" stroke-opacity="0.07"/><line x1="379.3" y1="108.9" x2="433.0" y2="121.5" stroke-opacity="0.08"/><line x1="433.0" y1="121.5" x2="504.2" y2="138.3" stroke-opacity="0.09"/><line x1="504.2" y1="138.3" x2="603.3" y2="161.6" stroke-opacity="0.08"/><line x1="238.8" y1="84.7" x2="211.2" y2="91.2" stroke-opacity="0.01"/><line x1="211.2" y1="91.2" x2="177.6" y2="99.1" stroke-opacity="0.04"/><line x1="177.6" y1="99.1" x2="135.7" y2="108.9" stroke-opacity="0.07"/><line x1="135.7" y1="108.9" x2="82.0" y2="121.5" stroke-opacity="0.08"/><line x1="82.0" y1="121.5" x2="10.8" y2="138.3" stroke-opacity="0.09"/><line x1="10.8" y1="138.3" x2="-88.3" y2="161.6" stroke-opacity="0.08"/><line x1="271.8" y1="85.9" x2="299.5" y2="92.6" stroke-opacity="0.02"/><line x1="299.5" y1="92.6" x2="333.3" y2="100.9" stroke-opacity="0.05"/><line x1="333.3" y1="100.9" x2="375.8" y2="111.2" stroke-opacity="0.08"/><line x1="375.8" y1="111.2" x2="430.5" y2="124.5" stroke-opacity="0.09"/><line x1="430.5" y1="124.5" x2="503.8" y2="142.3" stroke-opacity="0.10"/><line x1="503.8" y1="142.3" x2="606.8" y2="167.4" stroke-opacity="0.10"/><line x1="243.2" y1="85.9" x2="215.5" y2="92.6" stroke-opacity="0.02"/><line x1="215.5" y1="92.6" x2="181.7" y2="100.9" stroke-opacity="0.05"/><line x1="181.7" y1="100.9" x2="139.2" y2="111.2" stroke-opacity="0.08"/><line x1="139.2" y1="111.2" x2="84.5" y2="124.5" stroke-opacity="0.09"/><line x1="84.5" y1="124.5" x2="11.2" y2="142.3" stroke-opacity="0.10"/><line x1="11.2" y1="142.3" x2="-91.8" y2="167.4" stroke-opacity="0.10"/><line x1="267.2" y1="87.1" x2="295.0" y2="94.1" stroke-opacity="0.03"/><line x1="295.0" y1="94.1" x2="329.1" y2="102.7" stroke-opacity="0.06"/><line x1="329.1" y1="102.7" x2="372.1" y2="113.6" stroke-opacity="0.09"/><line x1="372.1" y1="113.6" x2="427.9" y2="127.6" stroke-opacity="0.11"/><line x1="427.9" y1="127.6" x2="503.3" y2="146.6" stroke-opacity="0.11"/><line x1="503.3" y1="146.6" x2="610.6" y2="173.7" stroke-opacity="0.11"/><line x1="247.8" y1="87.1" x2="220.0" y2="94.1" stroke-opacity="0.03"/><line x1="220.0" y1="94.1" x2="185.9" y2="102.7" stroke-opacity="0.06"/><line x1="185.9" y1="102.7" x2="142.9" y2="113.6" stroke-opacity="0.09"/><line x1="142.9" y1="113.6" x2="87.1" y2="127.6" stroke-opacity="0.11"/><line x1="87.1" y1="127.6" x2="11.7" y2="146.6" stroke-opacity="0.11"/><line x1="11.7" y1="146.6" x2="-95.6" y2="173.7" stroke-opacity="0.11"/><line x1="262.4" y1="88.4" x2="290.3" y2="95.7" stroke-opacity="0.03"/><line x1="290.3" y1="95.7" x2="324.7" y2="104.7" stroke-opacity="0.07"/><line x1="324.7" y1="104.7" x2="368.2" y2="116.1" stroke-opacity="0.10"/><line x1="368.2" y1="116.1" x2="425.2" y2="131.0" stroke-opacity="0.12"/><line x1="425.2" y1="131.0" x2="502.8" y2="151.2" stroke-opacity="0.12"/><line x1="502.8" y1="151.2" x2="614.8" y2="180.5" stroke-opacity="0.12"/><line x1="252.6" y1="88.4" x2="224.7" y2="95.7" stroke-opacity="0.03"/><line x1="224.7" y1="95.7" x2="190.3" y2="104.7" stroke-opacity="0.07"/><line x1="190.3" y1="104.7" x2="146.8" y2="116.1" stroke-opacity="0.10"/><line x1="146.8" y1="116.1" x2="89.8" y2="131.0" stroke-opacity="0.12"/><line x1="89.8" y1="131.0" x2="12.2" y2="151.2" stroke-opacity="0.12"/><line x1="12.2" y1="151.2" x2="-99.8" y2="180.5" stroke-opacity="0.12"/><line x1="257.5" y1="89.8" x2="285.4" y2="97.3" stroke-opacity="0.04"/><line x1="285.4" y1="97.3" x2="320.1" y2="106.7" stroke-opacity="0.08"/><line x1="320.1" y1="106.7" x2="364.2" y2="118.7" stroke-opacity="0.11"/><line x1="364.2" y1="118.7" x2="422.3" y2="134.5" stroke-opacity="0.13"/><line x1="422.3" y1="134.5" x2="502.2" y2="156.2" stroke-opacity="0.14"/><line x1="502.2" y1="156.2" x2="619.3" y2="188.0" stroke-opacity="0.13"/><line x1="257.5" y1="89.8" x2="229.6" y2="97.3" stroke-opacity="0.04"/><line x1="229.6" y1="97.3" x2="194.9" y2="106.7" stroke-opacity="0.08"/><line x1="194.9" y1="106.7" x2="150.8" y2="118.7" stroke-opacity="0.11"/><line x1="150.8" y1="118.7" x2="92.7" y2="134.5" stroke-opacity="0.13"/><line x1="92.7" y1="134.5" x2="12.8" y2="156.2" stroke-opacity="0.14"/><line x1="12.8" y1="156.2" x2="-104.3" y2="188.0" stroke-opacity="0.13"/><line x1="229.4" y1="84.7" x2="252.4" y2="91.2" stroke-opacity="0.01"/><line x1="252.4" y1="91.2" x2="280.3" y2="99.1" stroke-opacity="0.05"/><line x1="280.3" y1="99.1" x2="315.2" y2="108.9" stroke-opacity="0.09"/><line x1="315.2" y1="108.9" x2="359.9" y2="121.5" stroke-opacity="0.12"/><line x1="359.9" y1="121.5" x2="419.1" y2="138.3" stroke-opacity="0.14"/><line x1="419.1" y1="138.3" x2="501.6" y2="161.6" stroke-opacity="0.15"/><line x1="501.6" y1="161.6" x2="624.2" y2="196.2" stroke-opacity="0.14"/><line x1="285.6" y1="84.7" x2="262.6" y2="91.2" stroke-opacity="0.01"/><line x1="262.6" y1="91.2" x2="234.7" y2="99.1" stroke-opacity="0.05"/><line x1="234.7" y1="99.1" x2="199.8" y2="108.9" stroke-opacity="0.09"/><line x1="199.8" y1="108.9" x2="155.1" y2="121.5" stroke-opacity="0.12"/><line x1="155.1" y1="121.5" x2="95.9" y2="138.3" stroke-opacity="0.14"/><line x1="95.9" y1="138.3" x2="13.4" y2="161.6" stroke-opacity="0.15"/><line x1="13.4" y1="161.6" x2="-109.2" y2="196.2" stroke-opacity="0.14"/><line x1="224.1" y1="85.9" x2="247.0" y2="92.6" stroke-opacity="0.02"/><line x1="247.0" y1="92.6" x2="275.0" y2="100.9" stroke-opacity="0.06"/><line x1="275.0" y1="100.9" x2="310.1" y2="111.2" stroke-opacity="0.10"/><line x1="310.1" y1="111.2" x2="355.3" y2="124.5" stroke-opacity="0.13"/><line x1="355.3" y1="124.5" x2="415.8" y2="142.3" stroke-opacity="0.15"/><line x1="415.8" y1="142.3" x2="501.0" y2="167.4" stroke-opacity="0.16"/><line x1="501.0" y1="167.4" x2="629.7" y2="205.3" stroke-opacity="0.15"/><line x1="290.9" y1="85.9" x2="268.0" y2="92.6" stroke-opacity="0.02"/><line x1="268.0" y1="92.6" x2="240.0" y2="100.9" stroke-opacity="0.06"/><line x1="240.0" y1="100.9" x2="204.9" y2="111.2" stroke-opacity="0.10"/><line x1="204.9" y1="111.2" x2="159.7" y2="124.5" stroke-opacity="0.13"/><line x1="159.7" y1="124.5" x2="99.2" y2="142.3" stroke-opacity="0.15"/><line x1="99.2" y1="142.3" x2="14.0" y2="167.4" stroke-opacity="0.16"/><line x1="14.0" y1="167.4" x2="-114.7" y2="205.3" stroke-opacity="0.15"/><line x1="218.7" y1="87.1" x2="241.4" y2="94.1" stroke-opacity="0.02"/><line x1="241.4" y1="94.1" x2="269.4" y2="102.7" stroke-opacity="0.07"/><line x1="269.4" y1="102.7" x2="304.7" y2="113.6" stroke-opacity="0.11"/><line x1="304.7" y1="113.6" x2="350.5" y2="127.6" stroke-opacity="0.14"/><line x1="350.5" y1="127.6" x2="412.3" y2="146.6" stroke-opacity="0.16"/><line x1="412.3" y1="146.6" x2="500.3" y2="173.7" stroke-opacity="0.17"/><line x1="500.3" y1="173.7" x2="635.7" y2="215.3" stroke-opacity="0.16"/><line x1="296.3" y1="87.1" x2="273.6" y2="94.1" stroke-opacity="0.02"/><line x1="273.6" y1="94.1" x2="245.6" y2="102.7" stroke-opacity="0.07"/><line x1="245.6" y1="102.7" x2="210.3" y2="113.6" stroke-opacity="0.11"/><line x1="210.3" y1="113.6" x2="164.5" y2="127.6" stroke-opacity="0.14"/><line x1="164.5" y1="127.6" x2="102.7" y2="146.6" stroke-opacity="0.16"/><line x1="102.7" y1="146.6" x2="14.7" y2="173.7" stroke-opacity="0.17"/><line x1="14.7" y1="173.7" x2="-120.7" y2="215.3" stroke-opacity="0.16"/><line x1="213.0" y1="88.4" x2="235.6" y2="95.7" stroke-opacity="0.03"/><line x1="235.6" y1="95.7" x2="263.6" y2="104.7" stroke-opacity="0.08"/><line x1="263.6" y1="104.7" x2="299.0" y2="116.1" stroke-opacity="0.12"/><line x1="299.0" y1="116.1" x2="345.3" y2="131.0" stroke-opacity="0.15"/><line x1="345.3" y1="131.0" x2="408.4" y2="151.2" stroke-opacity="0.17"/><line x1="408.4" y1="151.2" x2="499.5" y2="180.5" stroke-opacity="0.18"/><line x1="499.5" y1="180.5" x2="642.4" y2="226.5" stroke-opacity="0.18"/><line x1="302.0" y1="88.4" x2="279.4" y2="95.7" stroke-opacity="0.03"/><line x1="279.4" y1="95.7" x2="251.4" y2="104.7" stroke-opacity="0.08"/><line x1="251.4" y1="104.7" x2="216.0" y2="116.1" stroke-opacity="0.12"/><line x1="216.0" y1="116.1" x2="169.7" y2="131.0" stroke-opacity="0.15"/><line x1="169.7" y1="131.0" x2="106.6" y2="151.2" stroke-opacity="0.17"/><line x1="106.6" y1="151.2" x2="15.5" y2="180.5" stroke-opacity="0.18"/><line x1="15.5" y1="180.5" x2="-127.4" y2="226.5" stroke-opacity="0.18"/><line x1="207.1" y1="89.8" x2="229.6" y2="97.3" stroke-opacity="0.04"/><line x1="229.6" y1="97.3" x2="257.5" y2="106.7" stroke-opacity="0.09"/><line x1="257.5" y1="106.7" x2="293.1" y2="118.7" stroke-opacity="0.13"/><line x1="293.1" y1="118.7" x2="339.9" y2="134.5" stroke-opacity="0.16"/><line x1="339.9" y1="134.5" x2="404.3" y2="156.2" stroke-opacity="0.19"/><line x1="404.3" y1="156.2" x2="498.7" y2="188.0" stroke-opacity="0.19"/><line x1="498.7" y1="188.0" x2="650.0" y2="239.0" stroke-opacity="0.19"/><line x1="307.9" y1="89.8" x2="285.4" y2="97.3" stroke-opacity="0.04"/><line x1="285.4" y1="97.3" x2="257.5" y2="106.7" stroke-opacity="0.09"/><line x1="257.5" y1="106.7" x2="221.9" y2="118.7" stroke-opacity="0.13"/><line x1="221.9" y1="118.7" x2="175.1" y2="134.5" stroke-opacity="0.16"/><line x1="175.1" y1="134.5" x2="110.7" y2="156.2" stroke-opacity="0.19"/><line x1="110.7" y1="156.2" x2="16.3" y2="188.0" stroke-opacity="0.19"/><line x1="16.3" y1="188.0" x2="-135.0" y2="239.0" stroke-opacity="0.19"/><line x1="200.9" y1="91.2" x2="223.3" y2="99.1" stroke-opacity="0.05"/><line x1="223.3" y1="99.1" x2="251.1" y2="108.9" stroke-opacity="0.09"/><line x1="251.1" y1="108.9" x2="286.7" y2="121.5" stroke-opacity="0.14"/><line x1="286.7" y1="121.5" x2="334.1" y2="138.3" stroke-opacity="0.17"/><line x1="334.1" y1="138.3" x2="399.9" y2="161.6" stroke-opacity="0.20"/><line x1="399.9" y1="161.6" x2="497.8" y2="196.2" stroke-opacity="0.21"/><line x1="497.8" y1="196.2" x2="658.5" y2="253.1" stroke-opacity="0.20"/><line x1="314.1" y1="91.2" x2="291.7" y2="99.1" stroke-opacity="0.05"/><line x1="291.7" y1="99.1" x2="263.9" y2="108.9" stroke-opacity="0.09"/><line x1="263.9" y1="108.9" x2="228.3" y2="121.5" stroke-opacity="0.14"/><line x1="228.3" y1="121.5" x2="180.9" y2="138.3" stroke-opacity="0.17"/><line x1="180.9" y1="138.3" x2="115.1" y2="161.6" stroke-opacity="0.20"/><line x1="115.1" y1="161.6" x2="17.2" y2="196.2" stroke-opacity="0.21"/><line x1="17.2" y1="196.2" x2="-143.5" y2="253.1" stroke-opacity="0.20"/><line x1="194.6" y1="92.6" x2="216.7" y2="100.9" stroke-opacity="0.05"/><line x1="216.7" y1="100.9" x2="244.4" y2="111.2" stroke-opacity="0.10"/><line x1="244.4" y1="111.2" x2="280.1" y2="124.5" stroke-opacity="0.15"/><line x1="280.1" y1="124.5" x2="327.9" y2="142.3" stroke-opacity="0.18"/><line x1="327.9" y1="142.3" x2="395.1" y2="167.4" stroke-opacity="0.21"/><line x1="395.1" y1="167.4" x2="496.8" y2="205.3" stroke-opacity="0.22"/><line x1="496.8" y1="205.3" x2="668.2" y2="269.2" stroke-opacity="0.21"/><line x1="320.4" y1="92.6" x2="298.3" y2="100.9" stroke-opacity="0.05"/><line x1="298.3" y1="100.9" x2="270.6" y2="111.2" stroke-opacity="0.10"/><line x1="270.6" y1="111.2" x2="234.9" y2="124.5" stroke-opacity="0.15"/><line x1="234.9" y1="124.5" x2="187.1" y2="142.3" stroke-opacity="0.18"/><line x1="187.1" y1="142.3" x2="119.9" y2="167.4" stroke-opacity="0.21"/><line x1="119.9" y1="167.4" x2="18.2" y2="205.3" stroke-opacity="0.22"/><line x1="18.2" y1="205.3" x2="-153.2" y2="269.2" stroke-opacity="0.21"/><line x1="187.9" y1="94.1" x2="209.8" y2="102.7" stroke-opacity="0.06"/><line x1="209.8" y1="102.7" x2="237.3" y2="113.6" stroke-opacity="0.11"/><line x1="237.3" y1="113.6" x2="273.0" y2="127.6" stroke-opacity="0.15"/><line x1="273.0" y1="127.6" x2="321.2" y2="146.6" stroke-opacity="0.19"/><line x1="321.2" y1="146.6" x2="389.9" y2="173.7" stroke-opacity="0.22"/><line x1="389.9" y1="173.7" x2="495.6" y2="215.3" stroke-opacity="0.23"/><line x1="495.6" y1="215.3" x2="679.3" y2="287.6" stroke-opacity="0.22"/><line x1="327.1" y1="94.1" x2="305.2" y2="102.7" stroke-opacity="0.06"/><line x1="305.2" y1="102.7" x2="277.7" y2="113.6" stroke-opacity="0.11"/><line x1="277.7" y1="113.6" x2="242.0" y2="127.6" stroke-opacity="0.15"/><line x1="242.0" y1="127.6" x2="193.8" y2="146.6" stroke-opacity="0.19"/><line x1="193.8" y1="146.6" x2="125.1" y2="173.7" stroke-opacity="0.22"/><line x1="125.1" y1="173.7" x2="19.4" y2="215.3" stroke-opacity="0.23"/><line x1="19.4" y1="215.3" x2="-164.3" y2="287.6" stroke-opacity="0.22"/><line x1="163.5" y1="88.4" x2="181.0" y2="95.7" stroke-opacity="0.01"/><line x1="181.0" y1="95.7" x2="202.5" y2="104.7" stroke-opacity="0.06"/><line x1="202.5" y1="104.7" x2="229.8" y2="116.1" stroke-opacity="0.12"/><line x1="229.8" y1="116.1" x2="265.5" y2="131.0" stroke-opacity="0.16"/><line x1="265.5" y1="131.0" x2="314.1" y2="151.2" stroke-opacity="0.20"/><line x1="314.1" y1="151.2" x2="384.3" y2="180.5" stroke-opacity="0.23"/><line x1="384.3" y1="180.5" x2="494.4" y2="226.5" stroke-opacity="0.24"/><line x1="494.4" y1="226.5" x2="692.2" y2="309.0" stroke-opacity="0.23"/><line x1="351.5" y1="88.4" x2="334.0" y2="95.7" stroke-opacity="0.01"/><line x1="334.0" y1="95.7" x2="312.5" y2="104.7" stroke-opacity="0.06"/><line x1="312.5" y1="104.7" x2="285.2" y2="116.1" stroke-opacity="0.12"/><line x1="285.2" y1="116.1" x2="249.5" y2="131.0" stroke-opacity="0.16"/><line x1="249.5" y1="131.0" x2="200.9" y2="151.2" stroke-opacity="0.20"/><line x1="200.9" y1="151.2" x2="130.7" y2="180.5" stroke-opacity="0.23"/><line x1="130.7" y1="180.5" x2="20.6" y2="226.5" stroke-opacity="0.24"/><line x1="20.6" y1="226.5" x2="-177.2" y2="309.0" stroke-opacity="0.23"/><line x1="156.7" y1="89.8" x2="173.7" y2="97.3" stroke-opacity="0.02"/><line x1="173.7" y1="97.3" x2="194.9" y2="106.7" stroke-opacity="0.07"/><line x1="194.9" y1="106.7" x2="221.9" y2="118.7" stroke-opacity="0.12"/><line x1="221.9" y1="118.7" x2="257.5" y2="134.5" stroke-opacity="0.17"/><line x1="257.5" y1="134.5" x2="306.4" y2="156.2" stroke-opacity="0.21"/><line x1="306.4" y1="156.2" x2="378.1" y2="188.0" stroke-opacity="0.24"/><line x1="378.1" y1="188.0" x2="493.0" y2="239.0" stroke-opacity="0.25"/><line x1="493.0" y1="239.0" x2="707.3" y2="334.0" stroke-opacity="0.24"/><line x1="358.3" y1="89.8" x2="341.3" y2="97.3" stroke-opacity="0.02"/><line x1="341.3" y1="97.3" x2="320.1" y2="106.7" stroke-opacity="0.07"/><line x1="320.1" y1="106.7" x2="293.1" y2="118.7" stroke-opacity="0.12"/><line x1="293.1" y1="118.7" x2="257.5" y2="134.5" stroke-opacity="0.17"/><line x1="257.5" y1="134.5" x2="208.6" y2="156.2" stroke-opacity="0.21"/><line x1="208.6" y1="156.2" x2="136.9" y2="188.0" stroke-opacity="0.24"/><line x1="136.9" y1="188.0" x2="22.0" y2="239.0" stroke-opacity="0.25"/><line x1="22.0" y1="239.0" x2="-192.3" y2="334.0" stroke-opacity="0.24"/><line x1="149.5" y1="91.2" x2="166.2" y2="99.1" stroke-opacity="0.02"/><line x1="166.2" y1="99.1" x2="187.0" y2="108.9" stroke-opacity="0.08"/><line x1="187.0" y1="108.9" x2="213.6" y2="121.5" stroke-opacity="0.13"/><line x1="213.6" y1="121.5" x2="249.0" y2="138.3" stroke-opacity="0.18"/><line x1="249.0" y1="138.3" x2="298.2" y2="161.6" stroke-opacity="0.22"/><line x1="298.2" y1="161.6" x2="371.3" y2="196.2" stroke-opacity="0.25"/><line x1="371.3" y1="196.2" x2="491.4" y2="253.1" stroke-opacity="0.26"/><line x1="491.4" y1="253.1" x2="725.3" y2="363.9" stroke-opacity="0.25"/><line x1="365.5" y1="91.2" x2="348.8" y2="99.1" stroke-opacity="0.02"/><line x1="348.8" y1="99.1" x2="328.0" y2="108.9" stroke-opacity="0.08"/><line x1="328.0" y1="108.9" x2="301.4" y2="121.5" stroke-opacity="0.13"/><line x1="301.4" y1="121.5" x2="266.0" y2="138.3" stroke-opacity="0.18"/><line x1="266.0" y1="138.3" x2="216.8" y2="161.6" stroke-opacity="0.22"/><line x1="216.8" y1="161.6" x2="143.7" y2="196.2" stroke-opacity="0.25"/><line x1="143.7" y1="196.2" x2="23.6" y2="253.1" stroke-opacity="0.26"/><line x1="23.6" y1="253.1" x2="-210.3" y2="363.9" stroke-opacity="0.25"/><line x1="142.1" y1="92.6" x2="158.3" y2="100.9" stroke-opacity="0.02"/><line x1="158.3" y1="100.9" x2="178.6" y2="111.2" stroke-opacity="0.08"/><line x1="178.6" y1="111.2" x2="204.8" y2="124.5" stroke-opacity="0.13"/><line x1="204.8" y1="124.5" x2="239.9" y2="142.3" stroke-opacity="0.18"/><line x1="239.9" y1="142.3" x2="289.3" y2="167.4" stroke-opacity="0.23"/><line x1="289.3" y1="167.4" x2="363.8" y2="205.3" stroke-opacity="0.26"/><line x1="363.8" y1="205.3" x2="489.6" y2="269.2" stroke-opacity="0.27"/><line x1="489.6" y1="269.2" x2="747.0" y2="399.9" stroke-opacity="0.26"/><line x1="372.9" y1="92.6" x2="356.7" y2="100.9" stroke-opacity="0.02"/><line x1="356.7" y1="100.9" x2="336.4" y2="111.2" stroke-opacity="0.08"/><line x1="336.4" y1="111.2" x2="310.2" y2="124.5" stroke-opacity="0.13"/><line x1="310.2" y1="124.5" x2="275.1" y2="142.3" stroke-opacity="0.18"/><line x1="275.1" y1="142.3" x2="225.7" y2="167.4" stroke-opacity="0.23"/><line x1="225.7" y1="167.4" x2="151.2" y2="205.3" stroke-opacity="0.26"/><line x1="151.2" y1="205.3" x2="25.4" y2="269.2" stroke-opacity="0.27"/><line x1="25.4" y1="269.2" x2="-232.0" y2="399.9" stroke-opacity="0.26"/><line x1="134.4" y1="94.1" x2="150.1" y2="102.7" stroke-opacity="0.03"/><line x1="150.1" y1="102.7" x2="169.8" y2="113.6" stroke-opacity="0.09"/><line x1="169.8" y1="113.6" x2="195.5" y2="127.6" stroke-opacity="0.14"/><line x1="195.5" y1="127.6" x2="230.2" y2="146.6" stroke-opacity="0.19"/><line x1="230.2" y1="146.6" x2="279.6" y2="173.7" stroke-opacity="0.23"/><line x1="279.6" y1="173.7" x2="355.6" y2="215.3" stroke-opacity="0.27"/><line x1="355.6" y1="215.3" x2="487.6" y2="287.6" stroke-opacity="0.28"/><line x1="380.6" y1="94.1" x2="364.9" y2="102.7" stroke-opacity="0.03"/><line x1="364.9" y1="102.7" x2="345.2" y2="113.6" stroke-opacity="0.09"/><line x1="345.2" y1="113.6" x2="319.5" y2="127.6" stroke-opacity="0.14"/><line x1="319.5" y1="127.6" x2="284.8" y2="146.6" stroke-opacity="0.19"/><line x1="284.8" y1="146.6" x2="235.4" y2="173.7" stroke-opacity="0.23"/><line x1="235.4" y1="173.7" x2="159.4" y2="215.3" stroke-opacity="0.27"/><line x1="159.4" y1="215.3" x2="27.4" y2="287.6" stroke-opacity="0.28"/><line x1="126.3" y1="95.7" x2="141.4" y2="104.7" stroke-opacity="0.03"/><line x1="141.4" y1="104.7" x2="160.6" y2="116.1" stroke-opacity="0.09"/><line x1="160.6" y1="116.1" x2="185.6" y2="131.0" stroke-opacity="0.14"/><line x1="185.6" y1="131.0" x2="219.8" y2="151.2" stroke-opacity="0.20"/><line x1="219.8" y1="151.2" x2="269.0" y2="180.5" stroke-opacity="0.24"/><line x1="269.0" y1="180.5" x2="346.3" y2="226.5" stroke-opacity="0.27"/><line x1="346.3" y1="226.5" x2="485.2" y2="309.0" stroke-opacity="0.29"/><line x1="388.7" y1="95.7" x2="373.6" y2="104.7" stroke-opacity="0.03"/><line x1="373.6" y1="104.7" x2="354.4" y2="116.1" stroke-opacity="0.09"/><line x1="354.4" y1="116.1" x2="329.4" y2="131.0" stroke-opacity="0.14"/><line x1="329.4" y1="131.0" x2="295.2" y2="151.2" stroke-opacity="0.20"/><line x1="295.2" y1="151.2" x2="246.0" y2="180.5" stroke-opacity="0.24"/><line x1="246.0" y1="180.5" x2="168.7" y2="226.5" stroke-opacity="0.27"/><line x1="168.7" y1="226.5" x2="29.8" y2="309.0" stroke-opacity="0.29"/><line x1="117.9" y1="97.3" x2="132.4" y2="106.7" stroke-opacity="0.03"/><line x1="132.4" y1="106.7" x2="150.8" y2="118.7" stroke-opacity="0.09"/><line x1="150.8" y1="118.7" x2="175.1" y2="134.5" stroke-opacity="0.15"/><line x1="175.1" y1="134.5" x2="208.6" y2="156.2" stroke-opacity="0.20"/><line x1="208.6" y1="156.2" x2="257.5" y2="188.0" stroke-opacity="0.25"/><line x1="257.5" y1="188.0" x2="336.0" y2="239.0" stroke-opacity="0.28"/><line x1="336.0" y1="239.0" x2="482.4" y2="334.0" stroke-opacity="0.30"/><line x1="397.1" y1="97.3" x2="382.6" y2="106.7" stroke-opacity="0.03"/><line x1="382.6" y1="106.7" x2="364.2" y2="118.7" stroke-opacity="0.09"/><line x1="364.2" y1="118.7" x2="339.9" y2="134.5" stroke-opacity="0.15"/><line x1="339.9" y1="134.5" x2="306.4" y2="156.2" stroke-opacity="0.20"/><line x1="306.4" y1="156.2" x2="257.5" y2="188.0" stroke-opacity="0.25"/><line x1="257.5" y1="188.0" x2="179.0" y2="239.0" stroke-opacity="0.28"/><line x1="179.0" y1="239.0" x2="32.6" y2="334.0" stroke-opacity="0.30"/><line x1="109.1" y1="99.1" x2="122.9" y2="108.9" stroke-opacity="0.04"/><line x1="122.9" y1="108.9" x2="140.5" y2="121.5" stroke-opacity="0.10"/><line x1="140.5" y1="121.5" x2="163.9" y2="138.3" stroke-opacity="0.15"/><line x1="163.9" y1="138.3" x2="196.5" y2="161.6" stroke-opacity="0.21"/><line x1="196.5" y1="161.6" x2="244.9" y2="196.2" stroke-opacity="0.25"/><line x1="244.9" y1="196.2" x2="324.3" y2="253.1" stroke-opacity="0.29"/><line x1="324.3" y1="253.1" x2="479.1" y2="363.9" stroke-opacity="0.30"/><line x1="405.9" y1="99.1" x2="392.1" y2="108.9" stroke-opacity="0.04"/><line x1="392.1" y1="108.9" x2="374.5" y2="121.5" stroke-opacity="0.10"/><line x1="374.5" y1="121.5" x2="351.1" y2="138.3" stroke-opacity="0.15"/><line x1="351.1" y1="138.3" x2="318.5" y2="161.6" stroke-opacity="0.21"/><line x1="318.5" y1="161.6" x2="270.1" y2="196.2" stroke-opacity="0.25"/><line x1="270.1" y1="196.2" x2="190.7" y2="253.1" stroke-opacity="0.29"/><line x1="190.7" y1="253.1" x2="35.9" y2="363.9" stroke-opacity="0.30"/><line x1="100.0" y1="100.9" x2="112.9" y2="111.2" stroke-opacity="0.04"/><line x1="112.9" y1="111.2" x2="129.6" y2="124.5" stroke-opacity="0.10"/><line x1="129.6" y1="124.5" x2="152.0" y2="142.3" stroke-opacity="0.16"/><line x1="152.0" y1="142.3" x2="183.4" y2="167.4" stroke-opacity="0.21"/><line x1="183.4" y1="167.4" x2="230.9" y2="205.3" stroke-opacity="0.26"/><line x1="230.9" y1="205.3" x2="311.1" y2="269.2" stroke-opacity="0.30"/><line x1="311.1" y1="269.2" x2="475.1" y2="399.9" stroke-opacity="0.31"/><line x1="415.0" y1="100.9" x2="402.1" y2="111.2" stroke-opacity="0.04"/><line x1="402.1" y1="111.2" x2="385.4" y2="124.5" stroke-opacity="0.10"/><line x1="385.4" y1="124.5" x2="363.0" y2="142.3" stroke-opacity="0.16"/><line x1="363.0" y1="142.3" x2="331.6" y2="167.4" stroke-opacity="0.21"/><line x1="331.6" y1="167.4" x2="284.1" y2="205.3" stroke-opacity="0.26"/><line x1="284.1" y1="205.3" x2="203.9" y2="269.2" stroke-opacity="0.30"/><line x1="203.9" y1="269.2" x2="39.9" y2="399.9" stroke-opacity="0.31"/><line x1="90.4" y1="102.7" x2="102.4" y2="113.6" stroke-opacity="0.04"/><line x1="102.4" y1="113.6" x2="118.1" y2="127.6" stroke-opacity="0.10"/><line x1="118.1" y1="127.6" x2="139.2" y2="146.6" stroke-opacity="0.16"/><line x1="139.2" y1="146.6" x2="169.2" y2="173.7" stroke-opacity="0.21"/><line x1="169.2" y1="173.7" x2="215.5" y2="215.3" stroke-opacity="0.26"/><line x1="215.5" y1="215.3" x2="295.8" y2="287.6" stroke-opacity="0.30"/><line x1="424.6" y1="102.7" x2="412.6" y2="113.6" stroke-opacity="0.04"/><line x1="412.6" y1="113.6" x2="396.9" y2="127.6" stroke-opacity="0.10"/><line x1="396.9" y1="127.6" x2="375.8" y2="146.6" stroke-opacity="0.16"/><line x1="375.8" y1="146.6" x2="345.8" y2="173.7" stroke-opacity="0.21"/><line x1="345.8" y1="173.7" x2="299.5" y2="215.3" stroke-opacity="0.26"/><line x1="299.5" y1="215.3" x2="219.2" y2="287.6" stroke-opacity="0.30"/><line x1="80.3" y1="104.7" x2="91.4" y2="116.1" stroke-opacity="0.04"/><line x1="91.4" y1="116.1" x2="105.8" y2="131.0" stroke-opacity="0.10"/><line x1="105.8" y1="131.0" x2="125.4" y2="151.2" stroke-opacity="0.16"/><line x1="125.4" y1="151.2" x2="153.8" y2="180.5" stroke-opacity="0.22"/><line x1="153.8" y1="180.5" x2="198.3" y2="226.5" stroke-opacity="0.27"/><line x1="198.3" y1="226.5" x2="278.2" y2="309.0" stroke-opacity="0.31"/><line x1="434.7" y1="104.7" x2="423.6" y2="116.1" stroke-opacity="0.04"/><line x1="423.6" y1="116.1" x2="409.2" y2="131.0" stroke-opacity="0.10"/><line x1="409.2" y1="131.0" x2="389.6" y2="151.2" stroke-opacity="0.16"/><line x1="389.6" y1="151.2" x2="361.2" y2="180.5" stroke-opacity="0.22"/><line x1="361.2" y1="180.5" x2="316.7" y2="226.5" stroke-opacity="0.27"/><line x1="316.7" y1="226.5" x2="236.8" y2="309.0" stroke-opacity="0.31"/><line x1="69.8" y1="106.7" x2="79.7" y2="118.7" stroke-opacity="0.04"/><line x1="79.7" y1="118.7" x2="92.7" y2="134.5" stroke-opacity="0.11"/><line x1="92.7" y1="134.5" x2="110.7" y2="156.2" stroke-opacity="0.16"/><line x1="110.7" y1="156.2" x2="136.9" y2="188.0" stroke-opacity="0.22"/><line x1="136.9" y1="188.0" x2="179.0" y2="239.0" stroke-opacity="0.27"/><line x1="179.0" y1="239.0" x2="257.5" y2="334.0" stroke-opacity="0.31"/><line x1="445.2" y1="106.7" x2="435.3" y2="118.7" stroke-opacity="0.04"/><line x1="435.3" y1="118.7" x2="422.3" y2="134.5" stroke-opacity="0.11"/><line x1="422.3" y1="134.5" x2="404.3" y2="156.2" stroke-opacity="0.16"/><line x1="404.3" y1="156.2" x2="378.1" y2="188.0" stroke-opacity="0.22"/><line x1="378.1" y1="188.0" x2="336.0" y2="239.0" stroke-opacity="0.27"/><line x1="336.0" y1="239.0" x2="257.5" y2="334.0" stroke-opacity="0.31"/><line x1="58.8" y1="108.9" x2="67.4" y2="121.5" stroke-opacity="0.05"/><line x1="67.4" y1="121.5" x2="78.8" y2="138.3" stroke-opacity="0.11"/><line x1="78.8" y1="138.3" x2="94.8" y2="161.6" stroke-opacity="0.16"/><line x1="94.8" y1="161.6" x2="118.4" y2="196.2" stroke-opacity="0.22"/><line x1="118.4" y1="196.2" x2="157.2" y2="253.1" stroke-opacity="0.27"/><line x1="157.2" y1="253.1" x2="232.9" y2="363.9" stroke-opacity="0.31"/><line x1="456.2" y1="108.9" x2="447.6" y2="121.5" stroke-opacity="0.05"/><line x1="447.6" y1="121.5" x2="436.2" y2="138.3" stroke-opacity="0.11"/><line x1="436.2" y1="138.3" x2="420.2" y2="161.6" stroke-opacity="0.16"/><line x1="420.2" y1="161.6" x2="396.6" y2="196.2" stroke-opacity="0.22"/><line x1="396.6" y1="196.2" x2="357.8" y2="253.1" stroke-opacity="0.27"/><line x1="357.8" y1="253.1" x2="282.1" y2="363.9" stroke-opacity="0.31"/><line x1="47.2" y1="111.2" x2="54.4" y2="124.5" stroke-opacity="0.05"/><line x1="54.4" y1="124.5" x2="64.0" y2="142.3" stroke-opacity="0.11"/><line x1="64.0" y1="142.3" x2="77.5" y2="167.4" stroke-opacity="0.17"/><line x1="77.5" y1="167.4" x2="98.0" y2="205.3" stroke-opacity="0.22"/><line x1="98.0" y1="205.3" x2="132.5" y2="269.2" stroke-opacity="0.27"/><line x1="132.5" y1="269.2" x2="203.1" y2="399.9" stroke-opacity="0.31"/><line x1="467.8" y1="111.2" x2="460.6" y2="124.5" stroke-opacity="0.05"/><line x1="460.6" y1="124.5" x2="451.0" y2="142.3" stroke-opacity="0.11"/><line x1="451.0" y1="142.3" x2="437.5" y2="167.4" stroke-opacity="0.17"/><line x1="437.5" y1="167.4" x2="417.0" y2="205.3" stroke-opacity="0.22"/><line x1="417.0" y1="205.3" x2="382.5" y2="269.2" stroke-opacity="0.27"/><line x1="382.5" y1="269.2" x2="311.9" y2="399.9" stroke-opacity="0.31"/><line x1="35.0" y1="113.6" x2="40.6" y2="127.6" stroke-opacity="0.05"/><line x1="40.6" y1="127.6" x2="48.1" y2="146.6" stroke-opacity="0.11"/><line x1="48.1" y1="146.6" x2="58.9" y2="173.7" stroke-opacity="0.17"/><line x1="58.9" y1="173.7" x2="75.4" y2="215.3" stroke-opacity="0.22"/><line x1="75.4" y1="215.3" x2="104.1" y2="287.6" stroke-opacity="0.27"/><line x1="480.0" y1="113.6" x2="474.4" y2="127.6" stroke-opacity="0.05"/><line x1="474.4" y1="127.6" x2="466.9" y2="146.6" stroke-opacity="0.11"/><line x1="466.9" y1="146.6" x2="456.1" y2="173.7" stroke-opacity="0.17"/><line x1="456.1" y1="173.7" x2="439.6" y2="215.3" stroke-opacity="0.22"/><line x1="439.6" y1="215.3" x2="410.9" y2="287.6" stroke-opacity="0.27"/><line x1="22.2" y1="116.1" x2="25.9" y2="131.0" stroke-opacity="0.05"/><line x1="25.9" y1="131.0" x2="31.1" y2="151.2" stroke-opacity="0.11"/><line x1="31.1" y1="151.2" x2="38.5" y2="180.5" stroke-opacity="0.17"/><line x1="38.5" y1="180.5" x2="50.2" y2="226.5" stroke-opacity="0.22"/><line x1="50.2" y1="226.5" x2="71.2" y2="309.0" stroke-opacity="0.27"/><line x1="492.8" y1="116.1" x2="489.1" y2="131.0" stroke-opacity="0.05"/><line x1="489.1" y1="131.0" x2="483.9" y2="151.2" stroke-opacity="0.11"/><line x1="483.9" y1="151.2" x2="476.5" y2="180.5" stroke-opacity="0.17"/><line x1="476.5" y1="180.5" x2="464.8" y2="226.5" stroke-opacity="0.22"/><line x1="464.8" y1="226.5" x2="443.8" y2="309.0" stroke-opacity="0.27"/><line x1="8.6" y1="118.7" x2="10.4" y2="134.5" stroke-opacity="0.05"/><line x1="10.4" y1="134.5" x2="12.8" y2="156.2" stroke-opacity="0.11"/><line x1="12.8" y1="156.2" x2="16.3" y2="188.0" stroke-opacity="0.16"/><line x1="16.3" y1="188.0" x2="22.0" y2="239.0" stroke-opacity="0.22"/><line x1="22.0" y1="239.0" x2="32.6" y2="334.0" stroke-opacity="0.27"/><line x1="506.4" y1="118.7" x2="504.6" y2="134.5" stroke-opacity="0.05"/><line x1="504.6" y1="134.5" x2="502.2" y2="156.2" stroke-opacity="0.11"/><line x1="502.2" y1="156.2" x2="498.7" y2="188.0" stroke-opacity="0.16"/><line x1="498.7" y1="188.0" x2="493.0" y2="239.0" stroke-opacity="0.22"/><line x1="493.0" y1="239.0" x2="482.4" y2="334.0" stroke-opacity="0.27"/></g><g stroke="#8a8581" stroke-width="0.9"><line x1="434.5" y1="41.7" x2="463.3" y2="43.2" stroke-opacity="0.01"/><line x1="463.3" y1="43.2" x2="496.3" y2="44.9" stroke-opacity="0.02"/><line x1="496.3" y1="44.9" x2="534.2" y2="46.8" stroke-opacity="0.02"/><line x1="80.5" y1="41.7" x2="51.7" y2="43.2" stroke-opacity="0.01"/><line x1="51.7" y1="43.2" x2="18.7" y2="44.9" stroke-opacity="0.02"/><line x1="18.7" y1="44.9" x2="-19.2" y2="46.8" stroke-opacity="0.02"/><line x1="357.7" y1="39.2" x2="378.7" y2="40.4" stroke-opacity="0.02"/><line x1="378.7" y1="40.4" x2="402.3" y2="41.7" stroke-opacity="0.04"/><line x1="402.3" y1="41.7" x2="429.0" y2="43.2" stroke-opacity="0.05"/><line x1="429.0" y1="43.2" x2="459.5" y2="44.9" stroke-opacity="0.06"/><line x1="459.5" y1="44.9" x2="494.6" y2="46.8" stroke-opacity="0.06"/><line x1="494.6" y1="46.8" x2="535.5" y2="49.1" stroke-opacity="0.06"/><line x1="157.3" y1="39.2" x2="136.3" y2="40.4" stroke-opacity="0.02"/><line x1="136.3" y1="40.4" x2="112.7" y2="41.7" stroke-opacity="0.04"/><line x1="112.7" y1="41.7" x2="86.0" y2="43.2" stroke-opacity="0.05"/><line x1="86.0" y1="43.2" x2="55.5" y2="44.9" stroke-opacity="0.06"/><line x1="55.5" y1="44.9" x2="20.4" y2="46.8" stroke-opacity="0.06"/><line x1="20.4" y1="46.8" x2="-20.5" y2="49.1" stroke-opacity="0.06"/><line x1="311.8" y1="38.2" x2="329.1" y2="39.2" stroke-opacity="0.02"/><line x1="329.1" y1="39.2" x2="348.4" y2="40.4" stroke-opacity="0.04"/><line x1="348.4" y1="40.4" x2="370.1" y2="41.7" stroke-opacity="0.06"/><line x1="370.1" y1="41.7" x2="394.7" y2="43.2" stroke-opacity="0.08"/><line x1="394.7" y1="43.2" x2="422.8" y2="44.9" stroke-opacity="0.09"/><line x1="422.8" y1="44.9" x2="455.1" y2="46.8" stroke-opacity="0.10"/><line x1="455.1" y1="46.8" x2="492.8" y2="49.1" stroke-opacity="0.11"/><line x1="492.8" y1="49.1" x2="537.2" y2="51.8" stroke-opacity="0.11"/><line x1="203.2" y1="38.2" x2="185.9" y2="39.2" stroke-opacity="0.02"/><line x1="185.9" y1="39.2" x2="166.6" y2="40.4" stroke-opacity="0.04"/><line x1="166.6" y1="40.4" x2="144.9" y2="41.7" stroke-opacity="0.06"/><line x1="144.9" y1="41.7" x2="120.3" y2="43.2" stroke-opacity="0.08"/><line x1="120.3" y1="43.2" x2="92.2" y2="44.9" stroke-opacity="0.09"/><line x1="92.2" y1="44.9" x2="59.9" y2="46.8" stroke-opacity="0.10"/><line x1="59.9" y1="46.8" x2="22.2" y2="49.1" stroke-opacity="0.11"/><line x1="22.2" y1="49.1" x2="-22.2" y2="51.8" stroke-opacity="0.11"/><line x1="270.4" y1="37.2" x2="284.6" y2="38.2" stroke-opacity="0.01"/><line x1="284.6" y1="38.2" x2="300.5" y2="39.2" stroke-opacity="0.03"/><line x1="300.5" y1="39.2" x2="318.1" y2="40.4" stroke-opacity="0.06"/><line x1="318.1" y1="40.4" x2="338.0" y2="41.7" stroke-opacity="0.08"/><line x1="338.0" y1="41.7" x2="360.4" y2="43.2" stroke-opacity="0.10"/><line x1="360.4" y1="43.2" x2="386.1" y2="44.9" stroke-opacity="0.12"/><line x1="386.1" y1="44.9" x2="415.6" y2="46.8" stroke-opacity="0.14"/><line x1="415.6" y1="46.8" x2="450.0" y2="49.1" stroke-opacity="0.15"/><line x1="450.0" y1="49.1" x2="490.5" y2="51.8" stroke-opacity="0.15"/><line x1="490.5" y1="51.8" x2="539.1" y2="55.0" stroke-opacity="0.15"/><line x1="244.6" y1="37.2" x2="230.4" y2="38.2" stroke-opacity="0.01"/><line x1="230.4" y1="38.2" x2="214.5" y2="39.2" stroke-opacity="0.03"/><line x1="214.5" y1="39.2" x2="196.9" y2="40.4" stroke-opacity="0.06"/><line x1="196.9" y1="40.4" x2="177.0" y2="41.7" stroke-opacity="0.08"/><line x1="177.0" y1="41.7" x2="154.6" y2="43.2" stroke-opacity="0.10"/><line x1="154.6" y1="43.2" x2="128.9" y2="44.9" stroke-opacity="0.12"/><line x1="128.9" y1="44.9" x2="99.4" y2="46.8" stroke-opacity="0.14"/><line x1="99.4" y1="46.8" x2="65.0" y2="49.1" stroke-opacity="0.15"/><line x1="65.0" y1="49.1" x2="24.5" y2="51.8" stroke-opacity="0.15"/><line x1="24.5" y1="51.8" x2="-24.1" y2="55.0" stroke-opacity="0.15"/><line x1="244.6" y1="37.2" x2="257.5" y2="38.2" stroke-opacity="0.01"/><line x1="257.5" y1="38.2" x2="271.8" y2="39.2" stroke-opacity="0.04"/><line x1="271.8" y1="39.2" x2="287.8" y2="40.4" stroke-opacity="0.07"/><line x1="287.8" y1="40.4" x2="305.8" y2="41.7" stroke-opacity="0.10"/><line x1="305.8" y1="41.7" x2="326.1" y2="43.2" stroke-opacity="0.12"/><line x1="326.1" y1="43.2" x2="349.3" y2="44.9" stroke-opacity="0.15"/><line x1="349.3" y1="44.9" x2="376.1" y2="46.8" stroke-opacity="0.16"/><line x1="376.1" y1="46.8" x2="407.2" y2="49.1" stroke-opacity="0.18"/><line x1="407.2" y1="49.1" x2="443.9" y2="51.8" stroke-opacity="0.19"/><line x1="443.9" y1="51.8" x2="487.9" y2="55.0" stroke-opacity="0.20"/><line x1="487.9" y1="55.0" x2="541.4" y2="58.9" stroke-opacity="0.20"/><line x1="270.4" y1="37.2" x2="257.5" y2="38.2" stroke-opacity="0.01"/><line x1="257.5" y1="38.2" x2="243.2" y2="39.2" stroke-opacity="0.04"/><line x1="243.2" y1="39.2" x2="227.2" y2="40.4" stroke-opacity="0.07"/><line x1="227.2" y1="40.4" x2="209.2" y2="41.7" stroke-opacity="0.10"/><line x1="209.2" y1="41.7" x2="188.9" y2="43.2" stroke-opacity="0.12"/><line x1="188.9" y1="43.2" x2="165.7" y2="44.9" stroke-opacity="0.15"/><line x1="165.7" y1="44.9" x2="138.9" y2="46.8" stroke-opacity="0.16"/><line x1="138.9" y1="46.8" x2="107.8" y2="49.1" stroke-opacity="0.18"/><line x1="107.8" y1="49.1" x2="71.1" y2="51.8" stroke-opacity="0.19"/><line x1="71.1" y1="51.8" x2="27.1" y2="55.0" stroke-opacity="0.20"/><line x1="27.1" y1="55.0" x2="-26.4" y2="58.9" stroke-opacity="0.20"/><line x1="230.4" y1="38.2" x2="243.2" y2="39.2" stroke-opacity="0.04"/><line x1="243.2" y1="39.2" x2="257.5" y2="40.4" stroke-opacity="0.07"/><line x1="257.5" y1="40.4" x2="273.6" y2="41.7" stroke-opacity="0.10"/><line x1="273.6" y1="41.7" x2="291.8" y2="43.2" stroke-opacity="0.13"/><line x1="291.8" y1="43.2" x2="312.6" y2="44.9" stroke-opacity="0.16"/><line x1="312.6" y1="44.9" x2="336.5" y2="46.8" stroke-opacity="0.19"/><line x1="336.5" y1="46.8" x2="364.4" y2="49.1" stroke-opacity="0.21"/><line x1="364.4" y1="49.1" x2="397.3" y2="51.8" stroke-opacity="0.22"/><line x1="397.3" y1="51.8" x2="436.7" y2="55.0" stroke-opacity="0.24"/><line x1="436.7" y1="55.0" x2="484.7" y2="58.9" stroke-opacity="0.24"/><line x1="484.7" y1="58.9" x2="544.4" y2="63.8" stroke-opacity="0.24"/><line x1="284.6" y1="38.2" x2="271.8" y2="39.2" stroke-opacity="0.04"/><line x1="271.8" y1="39.2" x2="257.5" y2="40.4" stroke-opacity="0.07"/><line x1="257.5" y1="40.4" x2="241.4" y2="41.7" stroke-opacity="0.10"/><line x1="241.4" y1="41.7" x2="223.2" y2="43.2" stroke-opacity="0.13"/><line x1="223.2" y1="43.2" x2="202.4" y2="44.9" stroke-opacity="0.16"/><line x1="202.4" y1="44.9" x2="178.5" y2="46.8" stroke-opacity="0.19"/><line x1="178.5" y1="46.8" x2="150.6" y2="49.1" stroke-opacity="0.21"/><line x1="150.6" y1="49.1" x2="117.7" y2="51.8" stroke-opacity="0.22"/><line x1="117.7" y1="51.8" x2="78.3" y2="55.0" stroke-opacity="0.24"/><line x1="78.3" y1="55.0" x2="30.3" y2="58.9" stroke-opacity="0.24"/><line x1="30.3" y1="58.9" x2="-29.4" y2="63.8" stroke-opacity="0.24"/><line x1="203.2" y1="38.2" x2="214.5" y2="39.2" stroke-opacity="0.03"/><line x1="214.5" y1="39.2" x2="227.2" y2="40.4" stroke-opacity="0.07"/><line x1="227.2" y1="40.4" x2="241.4" y2="41.7" stroke-opacity="0.10"/><line x1="241.4" y1="41.7" x2="257.5" y2="43.2" stroke-opacity="0.14"/><line x1="257.5" y1="43.2" x2="275.9" y2="44.9" stroke-opacity="0.17"/><line x1="275.9" y1="44.9" x2="297.0" y2="46.8" stroke-opacity="0.20"/><line x1="297.0" y1="46.8" x2="321.7" y2="49.1" stroke-opacity="0.22"/><line x1="321.7" y1="49.1" x2="350.7" y2="51.8" stroke-opacity="0.25"/><line x1="350.7" y1="51.8" x2="385.5" y2="55.0" stroke-opacity="0.27"/><line x1="385.5" y1="55.0" x2="427.9" y2="58.9" stroke-opacity="0.28"/><line x1="427.9" y1="58.9" x2="480.6" y2="63.8" stroke-opacity="0.29"/><line x1="480.6" y1="63.8" x2="548.1" y2="70.0" stroke-opacity="0.29"/><line x1="311.8" y1="38.2" x2="300.5" y2="39.2" stroke-opacity="0.03"/><line x1="300.5" y1="39.2" x2="287.8" y2="40.4" stroke-opacity="0.07"/><line x1="287.8" y1="40.4" x2="273.6" y2="41.7" stroke-opacity="0.10"/><line x1="273.6" y1="41.7" x2="257.5" y2="43.2" stroke-opacity="0.14"/><line x1="257.5" y1="43.2" x2="239.1" y2="44.9" stroke-opacity="0.17"/><line x1="239.1" y1="44.9" x2="218.0" y2="46.8" stroke-opacity="0.20"/><line x1="218.0" y1="46.8" x2="193.3" y2="49.1" stroke-opacity="0.22"/><line x1="193.3" y1="49.1" x2="164.3" y2="51.8" stroke-opacity="0.25"/><line x1="164.3" y1="51.8" x2="129.5" y2="55.0" stroke-opacity="0.27"/><line x1="129.5" y1="55.0" x2="87.1" y2="58.9" stroke-opacity="0.28"/><line x1="87.1" y1="58.9" x2="34.4" y2="63.8" stroke-opacity="0.29"/><line x1="34.4" y1="63.8" x2="-33.1" y2="70.0" stroke-opacity="0.29"/><line x1="176.1" y1="38.2" x2="185.9" y2="39.2" stroke-opacity="0.01"/><line x1="185.9" y1="39.2" x2="196.9" y2="40.4" stroke-opacity="0.05"/><line x1="196.9" y1="40.4" x2="209.2" y2="41.7" stroke-opacity="0.09"/><line x1="209.2" y1="41.7" x2="223.2" y2="43.2" stroke-opacity="0.13"/><line x1="223.2" y1="43.2" x2="239.1" y2="44.9" stroke-opacity="0.17"/><line x1="239.1" y1="44.9" x2="257.5" y2="46.8" stroke-opacity="0.20"/><line x1="257.5" y1="46.8" x2="278.9" y2="49.1" stroke-opacity="0.23"/><line x1="278.9" y1="49.1" x2="304.1" y2="51.8" stroke-opacity="0.26"/><line x1="304.1" y1="51.8" x2="334.3" y2="55.0" stroke-opacity="0.29"/><line x1="334.3" y1="55.0" x2="371.1" y2="58.9" stroke-opacity="0.31"/><line x1="371.1" y1="58.9" x2="416.9" y2="63.8" stroke-opacity="0.32"/><line x1="416.9" y1="63.8" x2="475.5" y2="70.0" stroke-opacity="0.33"/><line x1="475.5" y1="70.0" x2="553.1" y2="78.3" stroke-opacity="0.33"/><line x1="338.9" y1="38.2" x2="329.1" y2="39.2" stroke-opacity="0.01"/><line x1="329.1" y1="39.2" x2="318.1" y2="40.4" stroke-opacity="0.05"/><line x1="318.1" y1="40.4" x2="305.8" y2="41.7" stroke-opacity="0.09"/><line x1="305.8" y1="41.7" x2="291.8" y2="43.2" stroke-opacity="0.13"/><line x1="291.8" y1="43.2" x2="275.9" y2="44.9" stroke-opacity="0.17"/><line x1="275.9" y1="44.9" x2="257.5" y2="46.8" stroke-opacity="0.20"/><line x1="257.5" y1="46.8" x2="236.1" y2="49.1" stroke-opacity="0.23"/><line x1="236.1" y1="49.1" x2="210.9" y2="51.8" stroke-opacity="0.26"/><line x1="210.9" y1="51.8" x2="180.7" y2="55.0" stroke-opacity="0.29"/><line x1="180.7" y1="55.0" x2="143.9" y2="58.9" stroke-opacity="0.31"/><line x1="143.9" y1="58.9" x2="98.1" y2="63.8" stroke-opacity="0.32"/><line x1="98.1" y1="63.8" x2="39.5" y2="70.0" stroke-opacity="0.33"/><line x1="39.5" y1="70.0" x2="-38.1" y2="78.3" stroke-opacity="0.33"/><line x1="157.3" y1="39.2" x2="166.6" y2="40.4" stroke-opacity="0.03"/><line x1="166.6" y1="40.4" x2="177.0" y2="41.7" stroke-opacity="0.07"/><line x1="177.0" y1="41.7" x2="188.9" y2="43.2" stroke-opacity="0.12"/><line x1="188.9" y1="43.2" x2="202.4" y2="44.9" stroke-opacity="0.15"/><line x1="202.4" y1="44.9" x2="218.0" y2="46.8" stroke-opacity="0.19"/><line x1="218.0" y1="46.8" x2="236.1" y2="49.1" stroke-opacity="0.23"/><line x1="236.1" y1="49.1" x2="257.5" y2="51.8" stroke-opacity="0.26"/><line x1="257.5" y1="51.8" x2="283.1" y2="55.0" stroke-opacity="0.30"/><line x1="283.1" y1="55.0" x2="314.3" y2="58.9" stroke-opacity="0.33"/><line x1="314.3" y1="58.9" x2="353.1" y2="63.8" stroke-opacity="0.35"/><line x1="353.1" y1="63.8" x2="402.8" y2="70.0" stroke-opacity="0.37"/><line x1="402.8" y1="70.0" x2="468.7" y2="78.3" stroke-opacity="0.38"/><line x1="468.7" y1="78.3" x2="560.0" y2="89.8" stroke-opacity="0.38"/><line x1="357.7" y1="39.2" x2="348.4" y2="40.4" stroke-opacity="0.03"/><line x1="348.4" y1="40.4" x2="338.0" y2="41.7" stroke-opacity="0.07"/><line x1="338.0" y1="41.7" x2="326.1" y2="43.2" stroke-opacity="0.12"/><line x1="326.1" y1="43.2" x2="312.6" y2="44.9" stroke-opacity="0.15"/><line x1="312.6" y1="44.9" x2="297.0" y2="46.8" stroke-opacity="0.19"/><line x1="297.0" y1="46.8" x2="278.9" y2="49.1" stroke-opacity="0.23"/><line x1="278.9" y1="49.1" x2="257.5" y2="51.8" stroke-opacity="0.26"/><line x1="257.5" y1="51.8" x2="231.9" y2="55.0" stroke-opacity="0.30"/><line x1="231.9" y1="55.0" x2="200.7" y2="58.9" stroke-opacity="0.33"/><line x1="200.7" y1="58.9" x2="161.9" y2="63.8" stroke-opacity="0.35"/><line x1="161.9" y1="63.8" x2="112.2" y2="70.0" stroke-opacity="0.37"/><line x1="112.2" y1="70.0" x2="46.3" y2="78.3" stroke-opacity="0.38"/><line x1="46.3" y1="78.3" x2="-45.0" y2="89.8" stroke-opacity="0.38"/><line x1="128.6" y1="39.2" x2="136.3" y2="40.4" stroke-opacity="0.01"/><line x1="136.3" y1="40.4" x2="144.9" y2="41.7" stroke-opacity="0.05"/><line x1="144.9" y1="41.7" x2="154.6" y2="43.2" stroke-opacity="0.09"/><line x1="154.6" y1="43.2" x2="165.7" y2="44.9" stroke-opacity="0.14"/><line x1="165.7" y1="44.9" x2="178.5" y2="46.8" stroke-opacity="0.18"/><line x1="178.5" y1="46.8" x2="193.3" y2="49.1" stroke-opacity="0.22"/><line x1="193.3" y1="49.1" x2="210.9" y2="51.8" stroke-opacity="0.26"/><line x1="210.9" y1="51.8" x2="231.9" y2="55.0" stroke-opacity="0.29"/><line x1="231.9" y1="55.0" x2="257.5" y2="58.9" stroke-opacity="0.33"/><line x1="257.5" y1="58.9" x2="289.4" y2="63.8" stroke-opacity="0.36"/><line x1="289.4" y1="63.8" x2="330.2" y2="70.0" stroke-opacity="0.39"/><line x1="330.2" y1="70.0" x2="384.2" y2="78.3" stroke-opacity="0.41"/><line x1="384.2" y1="78.3" x2="459.2" y2="89.8" stroke-opacity="0.42"/><line x1="459.2" y1="89.8" x2="570.3" y2="106.7" stroke-opacity="0.42"/><line x1="386.4" y1="39.2" x2="378.7" y2="40.4" stroke-opacity="0.01"/><line x1="378.7" y1="40.4" x2="370.1" y2="41.7" stroke-opacity="0.05"/><line x1="370.1" y1="41.7" x2="360.4" y2="43.2" stroke-opacity="0.09"/><line x1="360.4" y1="43.2" x2="349.3" y2="44.9" stroke-opacity="0.14"/><line x1="349.3" y1="44.9" x2="336.5" y2="46.8" stroke-opacity="0.18"/><line x1="336.5" y1="46.8" x2="321.7" y2="49.1" stroke-opacity="0.22"/><line x1="321.7" y1="49.1" x2="304.1" y2="51.8" stroke-opacity="0.26"/><line x1="304.1" y1="51.8" x2="283.1" y2="55.0" stroke-opacity="0.29"/><line x1="283.1" y1="55.0" x2="257.5" y2="58.9" stroke-opacity="0.33"/><line x1="257.5" y1="58.9" x2="225.6" y2="63.8" stroke-opacity="0.36"/><line x1="225.6" y1="63.8" x2="184.8" y2="70.0" stroke-opacity="0.39"/><line x1="184.8" y1="70.0" x2="130.8" y2="78.3" stroke-opacity="0.41"/><line x1="130.8" y1="78.3" x2="55.8" y2="89.8" stroke-opacity="0.42"/><line x1="55.8" y1="89.8" x2="-55.3" y2="106.7" stroke-opacity="0.42"/><line x1="106.0" y1="40.4" x2="112.7" y2="41.7" stroke-opacity="0.02"/><line x1="112.7" y1="41.7" x2="120.3" y2="43.2" stroke-opacity="0.06"/><line x1="120.3" y1="43.2" x2="128.9" y2="44.9" stroke-opacity="0.11"/><line x1="128.9" y1="44.9" x2="138.9" y2="46.8" stroke-opacity="0.15"/><line x1="138.9" y1="46.8" x2="150.6" y2="49.1" stroke-opacity="0.19"/><line x1="150.6" y1="49.1" x2="164.3" y2="51.8" stroke-opacity="0.24"/><line x1="164.3" y1="51.8" x2="180.7" y2="55.0" stroke-opacity="0.28"/><line x1="180.7" y1="55.0" x2="200.7" y2="58.9" stroke-opacity="0.32"/><line x1="200.7" y1="58.9" x2="225.6" y2="63.8" stroke-opacity="0.36"/><line x1="225.6" y1="63.8" x2="257.5" y2="70.0" stroke-opacity="0.39"/><line x1="257.5" y1="70.0" x2="299.7" y2="78.3" stroke-opacity="0.42"/><line x1="299.7" y1="78.3" x2="358.3" y2="89.8" stroke-opacity="0.45"/><line x1="358.3" y1="89.8" x2="445.2" y2="106.7" stroke-opacity="0.47"/><line x1="445.2" y1="106.7" x2="587.0" y2="134.5" stroke-opacity="0.47"/><line x1="409.0" y1="40.4" x2="402.3" y2="41.7" stroke-opacity="0.02"/><line x1="402.3" y1="41.7" x2="394.7" y2="43.2" stroke-opacity="0.06"/><line x1="394.7" y1="43.2" x2="386.1" y2="44.9" stroke-opacity="0.11"/><line x1="386.1" y1="44.9" x2="376.1" y2="46.8" stroke-opacity="0.15"/><line x1="376.1" y1="46.8" x2="364.4" y2="49.1" stroke-opacity="0.19"/><line x1="364.4" y1="49.1" x2="350.7" y2="51.8" stroke-opacity="0.24"/><line x1="350.7" y1="51.8" x2="334.3" y2="55.0" stroke-opacity="0.28"/><line x1="334.3" y1="55.0" x2="314.3" y2="58.9" stroke-opacity="0.32"/><line x1="314.3" y1="58.9" x2="289.4" y2="63.8" stroke-opacity="0.36"/><line x1="289.4" y1="63.8" x2="257.5" y2="70.0" stroke-opacity="0.39"/><line x1="257.5" y1="70.0" x2="215.3" y2="78.3" stroke-opacity="0.42"/><line x1="215.3" y1="78.3" x2="156.7" y2="89.8" stroke-opacity="0.45"/><line x1="156.7" y1="89.8" x2="69.8" y2="106.7" stroke-opacity="0.47"/><line x1="69.8" y1="106.7" x2="-72.0" y2="134.5" stroke-opacity="0.47"/><line x1="80.5" y1="41.7" x2="86.0" y2="43.2" stroke-opacity="0.03"/><line x1="86.0" y1="43.2" x2="92.2" y2="44.9" stroke-opacity="0.07"/><line x1="92.2" y1="44.9" x2="99.4" y2="46.8" stroke-opacity="0.12"/><line x1="99.4" y1="46.8" x2="107.8" y2="49.1" stroke-opacity="0.16"/><line x1="107.8" y1="49.1" x2="117.7" y2="51.8" stroke-opacity="0.21"/><line x1="117.7" y1="51.8" x2="129.5" y2="55.0" stroke-opacity="0.25"/><line x1="129.5" y1="55.0" x2="143.9" y2="58.9" stroke-opacity="0.30"/><line x1="143.9" y1="58.9" x2="161.9" y2="63.8" stroke-opacity="0.34"/><line x1="161.9" y1="63.8" x2="184.8" y2="70.0" stroke-opacity="0.38"/><line x1="184.8" y1="70.0" x2="215.3" y2="78.3" stroke-opacity="0.42"/><line x1="215.3" y1="78.3" x2="257.5" y2="89.8" stroke-opacity="0.46"/><line x1="257.5" y1="89.8" x2="320.1" y2="106.7" stroke-opacity="0.48"/><line x1="320.1" y1="106.7" x2="422.3" y2="134.5" stroke-opacity="0.48"/><line x1="422.3" y1="134.5" x2="619.3" y2="188.0" stroke-opacity="0.48"/><line x1="434.5" y1="41.7" x2="429.0" y2="43.2" stroke-opacity="0.03"/><line x1="429.0" y1="43.2" x2="422.8" y2="44.9" stroke-opacity="0.07"/><line x1="422.8" y1="44.9" x2="415.6" y2="46.8" stroke-opacity="0.12"/><line x1="415.6" y1="46.8" x2="407.2" y2="49.1" stroke-opacity="0.16"/><line x1="407.2" y1="49.1" x2="397.3" y2="51.8" stroke-opacity="0.21"/><line x1="397.3" y1="51.8" x2="385.5" y2="55.0" stroke-opacity="0.25"/><line x1="385.5" y1="55.0" x2="371.1" y2="58.9" stroke-opacity="0.30"/><line x1="371.1" y1="58.9" x2="353.1" y2="63.8" stroke-opacity="0.34"/><line x1="353.1" y1="63.8" x2="330.2" y2="70.0" stroke-opacity="0.38"/><line x1="330.2" y1="70.0" x2="299.7" y2="78.3" stroke-opacity="0.42"/><line x1="299.7" y1="78.3" x2="257.5" y2="89.8" stroke-opacity="0.46"/><line x1="257.5" y1="89.8" x2="194.9" y2="106.7" stroke-opacity="0.48"/><line x1="194.9" y1="106.7" x2="92.7" y2="134.5" stroke-opacity="0.48"/><line x1="92.7" y1="134.5" x2="-104.3" y2="188.0" stroke-opacity="0.48"/><line x1="51.7" y1="43.2" x2="55.5" y2="44.9" stroke-opacity="0.04"/><line x1="55.5" y1="44.9" x2="59.9" y2="46.8" stroke-opacity="0.08"/><line x1="59.9" y1="46.8" x2="65.0" y2="49.1" stroke-opacity="0.13"/><line x1="65.0" y1="49.1" x2="71.1" y2="51.8" stroke-opacity="0.17"/><line x1="71.1" y1="51.8" x2="78.3" y2="55.0" stroke-opacity="0.22"/><line x1="78.3" y1="55.0" x2="87.1" y2="58.9" stroke-opacity="0.26"/><line x1="87.1" y1="58.9" x2="98.1" y2="63.8" stroke-opacity="0.31"/><line x1="98.1" y1="63.8" x2="112.2" y2="70.0" stroke-opacity="0.35"/><line x1="112.2" y1="70.0" x2="130.8" y2="78.3" stroke-opacity="0.39"/><line x1="130.8" y1="78.3" x2="156.7" y2="89.8" stroke-opacity="0.44"/><line x1="156.7" y1="89.8" x2="194.9" y2="106.7" stroke-opacity="0.48"/><line x1="194.9" y1="106.7" x2="257.5" y2="134.5" stroke-opacity="0.48"/><line x1="257.5" y1="134.5" x2="378.1" y2="188.0" stroke-opacity="0.48"/><line x1="378.1" y1="188.0" x2="707.3" y2="334.0" stroke-opacity="0.48"/><line x1="463.3" y1="43.2" x2="459.5" y2="44.9" stroke-opacity="0.04"/><line x1="459.5" y1="44.9" x2="455.1" y2="46.8" stroke-opacity="0.08"/><line x1="455.1" y1="46.8" x2="450.0" y2="49.1" stroke-opacity="0.13"/><line x1="450.0" y1="49.1" x2="443.9" y2="51.8" stroke-opacity="0.17"/><line x1="443.9" y1="51.8" x2="436.7" y2="55.0" stroke-opacity="0.22"/><line x1="436.7" y1="55.0" x2="427.9" y2="58.9" stroke-opacity="0.26"/><line x1="427.9" y1="58.9" x2="416.9" y2="63.8" stroke-opacity="0.31"/><line x1="416.9" y1="63.8" x2="402.8" y2="70.0" stroke-opacity="0.35"/><line x1="402.8" y1="70.0" x2="384.2" y2="78.3" stroke-opacity="0.39"/><line x1="384.2" y1="78.3" x2="358.3" y2="89.8" stroke-opacity="0.44"/><line x1="358.3" y1="89.8" x2="320.1" y2="106.7" stroke-opacity="0.48"/><line x1="320.1" y1="106.7" x2="257.5" y2="134.5" stroke-opacity="0.48"/><line x1="257.5" y1="134.5" x2="136.9" y2="188.0" stroke-opacity="0.48"/><line x1="136.9" y1="188.0" x2="-192.3" y2="334.0" stroke-opacity="0.48"/><line x1="18.7" y1="44.9" x2="20.4" y2="46.8" stroke-opacity="0.04"/><line x1="20.4" y1="46.8" x2="22.2" y2="49.1" stroke-opacity="0.08"/><line x1="22.2" y1="49.1" x2="24.5" y2="51.8" stroke-opacity="0.13"/><line x1="24.5" y1="51.8" x2="27.1" y2="55.0" stroke-opacity="0.18"/><line x1="27.1" y1="55.0" x2="30.3" y2="58.9" stroke-opacity="0.22"/><line x1="30.3" y1="58.9" x2="34.4" y2="63.8" stroke-opacity="0.27"/><line x1="34.4" y1="63.8" x2="39.5" y2="70.0" stroke-opacity="0.31"/><line x1="39.5" y1="70.0" x2="46.3" y2="78.3" stroke-opacity="0.36"/><line x1="46.3" y1="78.3" x2="55.8" y2="89.8" stroke-opacity="0.40"/><line x1="55.8" y1="89.8" x2="69.8" y2="106.7" stroke-opacity="0.45"/><line x1="69.8" y1="106.7" x2="92.7" y2="134.5" stroke-opacity="0.48"/><line x1="92.7" y1="134.5" x2="136.9" y2="188.0" stroke-opacity="0.48"/><line x1="136.9" y1="188.0" x2="257.5" y2="334.0" stroke-opacity="0.48"/><line x1="496.3" y1="44.9" x2="494.6" y2="46.8" stroke-opacity="0.04"/><line x1="494.6" y1="46.8" x2="492.8" y2="49.1" stroke-opacity="0.08"/><line x1="492.8" y1="49.1" x2="490.5" y2="51.8" stroke-opacity="0.13"/><line x1="490.5" y1="51.8" x2="487.9" y2="55.0" stroke-opacity="0.18"/><line x1="487.9" y1="55.0" x2="484.7" y2="58.9" stroke-opacity="0.22"/><line x1="484.7" y1="58.9" x2="480.6" y2="63.8" stroke-opacity="0.27"/><line x1="480.6" y1="63.8" x2="475.5" y2="70.0" stroke-opacity="0.31"/><line x1="475.5" y1="70.0" x2="468.7" y2="78.3" stroke-opacity="0.36"/><line x1="468.7" y1="78.3" x2="459.2" y2="89.8" stroke-opacity="0.40"/><line x1="459.2" y1="89.8" x2="445.2" y2="106.7" stroke-opacity="0.45"/><line x1="445.2" y1="106.7" x2="422.3" y2="134.5" stroke-opacity="0.48"/><line x1="422.3" y1="134.5" x2="378.1" y2="188.0" stroke-opacity="0.48"/><line x1="378.1" y1="188.0" x2="257.5" y2="334.0" stroke-opacity="0.48"/></g></svg>

</div>
<!-- scene gizmo -->
<svg style="left:630px;top:70px;will-change:transform" width="56" height="62" viewBox="0 0 56 62">
<text x="27.2" y="8.6" font-family="Liberation Sans" font-size="6.8" fill="#f4f4f4" text-anchor="middle">y</text>
<g fill="#cfcfcf">
<path d="M15.6 23.4 L18.6 20.2 L26.5 26.2 L25 28.6 Z"/><ellipse cx="17.1" cy="21.8" rx="2.4" ry="1.7" transform="rotate(-45 17.1 21.8)"/>
<path d="M38.8 23.4 L35.8 20.2 L27.9 26.2 L29.4 28.6 Z"/><ellipse cx="37.3" cy="21.8" rx="2.4" ry="1.7" transform="rotate(45 37.3 21.8)"/>
<path d="M27.2 31 L24.8 40.4 L29.8 40.4 Z" fill="#e2e2e2"/><ellipse cx="27.3" cy="40.4" rx="2.5" ry="0.9" fill="#ececec"/>
<ellipse cx="27.2" cy="27.2" rx="4.6" ry="4.2" fill="#c6c6c6"/>
<ellipse cx="27.2" cy="25.4" rx="3.6" ry="1.4" fill="#a9a9a9"/>
</g>
<path d="M22.8 10.6 L32.2 10.6 L27.2 21.7 Z" fill="#2fb51c"/><path d="M27.2 10.6 L32.2 10.6 L27.2 21.7 Z" fill="#46d030"/><ellipse cx="27.5" cy="10.8" rx="4.7" ry="1.2" fill="#6ee65a"/>
<path d="M10.6 29.4 L23.9 28.9 L15 37.5 Z" fill="#a61212"/><path d="M10.6 29.4 L14.5 29.2 L15 37.5Z" fill="#d42020"/>
<path d="M43.5 29.4 L31 28.9 L40 37.5 Z" fill="#1328c0"/><path d="M43.5 29.4 L39.5 29.2 L40 37.5Z" fill="#2a48ee"/>
<text x="7.4" y="38.2" font-family="Liberation Sans" font-size="6.8" fill="#f4f4f4" text-anchor="middle">x</text>
<text x="46.4" y="38.6" font-family="Liberation Sans" font-size="6.8" fill="#f4f4f4" text-anchor="middle">z</text>
<path d="M46 7 a1.6 1.6 0 0 1 3.2 0 v1.2" fill="none" stroke="#d8d3cf" stroke-width="0.7" opacity="0.6"/><rect x="45.2" y="8" width="4.4" height="3" fill="#d8d3cf" opacity="0.5"/>
</svg>
<svg style="left:643px;top:122px" width="8" height="7" viewBox="0 0 8 7"><path d="M7 0.6 L1 3.2 L7 5.8 M7 2 L3.4 3.2 L7 4.4" fill="none" stroke="#cfcfcf" stroke-width="0.7"/></svg>
<div class="t" style="left:651px;top:121.3px;color:#d4d4d4;font-size:7.6px;-webkit-text-stroke:0">Persp</div>
<!-- camera icon -->
<svg style="left:360px;top:162px" width="10" height="8" viewBox="0 0 10 8"><path d="M0.9 4.6 C1.2 3.6 2.2 3.2 3.2 3.4 C3.6 2.2 4.2 1.2 5.2 1.2 C6.2 1.2 6.6 2.4 6.8 3.6 L8.4 4.4 C9.2 4.8 9.4 5.6 8.8 6.2 L7 7.3 L3.2 7.2 C2 7 1 6 0.9 4.6Z" fill="#f6f6f6"/></svg>
<!-- light icon -->
<svg style="left:422px;top:162.2px" width="13" height="13" viewBox="0 0 13 13"><path d="M9.28 7.62L12.50 6.50L9.28 5.38ZM7.67 9.26L10.74 10.74L9.26 7.67ZM5.38 9.28L6.50 12.50L7.62 9.28ZM3.74 7.67L2.26 10.74L5.33 9.26ZM3.72 5.38L0.50 6.50L3.72 7.62ZM5.33 3.74L2.26 2.26L3.74 5.33ZM7.62 3.72L6.50 0.50L5.38 3.72ZM9.26 5.33L10.74 2.26L7.67 3.74Z" fill="#c9c1a4"/><circle cx="6.5" cy="6.5" r="3.5" fill="#bdb59a"/><circle cx="6.5" cy="6.5" r="2.6" fill="#8f8a78"/><circle cx="6.5" cy="6.5" r="2.1" fill="#fff6d2"/></svg>

<!-- divider scene/inspector -->
<div class="a" style="left:686px;top:45px;width:2px;height:482px;background:#191919"></div>

<!-- ===== Inspector ===== -->
<div class="a" style="left:688px;top:45px;width:172px;height:482px;background:#383838"></div>
<div class="a" style="left:688px;top:45px;width:172px;height:12px;background:#252525"></div>
<div class="a" style="left:688px;top:46px;width:53px;height:11px;background:#3c3c3c"></div>
<div class="t" style="left:700.7px;top:48px">Inspector</div>
<svg style="left:692.7px;top:48.6px" width="5.6" height="5.6" viewBox="0 0 5.6 5.6"><circle cx="2.8" cy="2.8" r="2.8" fill="#d0d0d0"/><path d="M2.8 2.4V4.6" stroke="#3a3a3a" stroke-width="0.9"/><circle cx="2.8" cy="1.4" r="0.5" fill="#3a3a3a"/></svg>
<svg style="left:843px;top:48.2px" width="5" height="6" viewBox="0 0 5 6"><path d="M1.2 2.8 V1.9 A1.5 1.5 0 0 1 4.2 1.9 V2.2" fill="none" stroke="#bdbdbd" stroke-width="0.8"/><rect x="0.5" y="2.9" width="4" height="2.8" rx="0.3" fill="#bdbdbd"/></svg>
<svg style="left:852px;top:48px" width="2" height="6" viewBox="0 0 2 6"><g fill="#c8c8c8"><circle cx="1" cy="0.8" r="0.7"/><circle cx="1" cy="3" r="0.7"/><circle cx="1" cy="5.2" r="0.7"/></g></svg>

<!-- ===== Project ===== -->
<div class="a" style="left:1px;top:337px;width:685px;height:190px;background:#383838"></div>
<div class="a" style="left:1px;top:337px;width:685px;height:11px;background:#252525"></div>
<div class="a" style="left:1.2px;top:337.4px;width:45.8px;height:10.8px;background:#3c3c3c;border-top:1.8px solid #3a7cc6"></div>
<div class="t" style="left:13.6px;top:339.5px">Project</div>
<div class="t" style="left:60.6px;top:339.5px">Console</div>
<div class="a" style="left:1px;top:348px;width:685px;height:12px;background:#3c3c3c;border-bottom:1px solid #232323"></div>
<div class="a" style="left:451.6px;top:348.8px;width:169px;height:10px;background:#2a2a2a;border-radius:1.5px"></div>

<div class="a" style="left:107px;top:360px;width:579px;height:167px;background:#333"></div>
<div class="a" style="left:106.3px;top:360px;width:1px;height:167px;background:#2e2e2e"></div>
<div class="a" style="left:107px;top:360px;width:579px;height:12px;background:#3e3e3e"></div>
<div class="t b" style="left:110px;top:363px">Assets</div>
<div class="a" style="left:107px;top:516.7px;width:579px;height:10.4px;background:#3e3e3e"></div>

<div class="t b" style="left:21px;top:361.5px">Favorites</div>
<div class="t" style="left:28.2px;top:370.5px">All Materials</div>
<div class="t" style="left:28.2px;top:379.5px">All Models</div>
<div class="t" style="left:28.2px;top:388.5px">All Prefabs</div>
<div class="a" style="left:1px;top:405px;width:105px;height:9px;background:#484848"></div>
<div class="t b" style="left:20.8px;top:406.5px">Assets</div>
<div class="t" style="left:28.2px;top:415.5px;letter-spacing:0.25px">niwako-v01-decim</div>
<div class="t b" style="left:20.8px;top:424.5px">Packages</div>


<!-- project icons -->
<svg style="left:4.6px;top:341.2px" width="7" height="5" viewBox="0 0 7 5"><path d="M0 0H2.6L3.4 0.9H7V5H0Z" fill="#c0c0c0"/></svg>
<svg style="left:52px;top:340.6px" width="6" height="6.4" viewBox="0 0 6 6.4"><rect x="0" y="0" width="6" height="6.4" rx="0.6" fill="#b8b8b8"/><path d="M1.2 1.6H4.8M1.2 3.2H4.8M1.2 4.8H3.6" stroke="#3a3a3a" stroke-width="0.6"/></svg>
<svg style="left:4.6px;top:350.8px" width="7" height="7" viewBox="0 0 7 7"><path d="M3.5 0V7M0 3.5H7" stroke="#d0d0d0" stroke-width="1.4"/></svg>
<svg style="left:14px;top:352.8px" width="4.4" height="3" viewBox="0 0 4.4 3"><path d="M0 0H4.4L2.2 2.8Z" fill="#c8c8c8"/></svg>
<svg style="left:666.9px;top:339.7px" width="5" height="6" viewBox="0 0 5 6"><path d="M1.2 2.8 V1.9 A1.5 1.5 0 0 1 4.2 1.9 V2.2" fill="none" stroke="#bdbdbd" stroke-width="0.8"/><rect x="0.5" y="2.9" width="4" height="2.8" rx="0.3" fill="#bdbdbd"/></svg>
<svg style="left:677.8px;top:339.8px" width="2" height="6" viewBox="0 0 2 6"><g fill="#c8c8c8"><circle cx="1" cy="0.8" r="0.7"/><circle cx="1" cy="3" r="0.7"/><circle cx="1" cy="5.2" r="0.7"/></g></svg>
<svg style="left:454.5px;top:351.8px" width="4" height="4" viewBox="0 0 4 4"><circle cx="1.6" cy="1.6" r="1.1" fill="none" stroke="#9a9a9a" stroke-width="0.7"/><path d="M2.4 2.4L3.8 3.8" stroke="#9a9a9a" stroke-width="0.7"/></svg>
<div class="a" style="left:622.5px;top:348.5px;width:13.5px;height:11px;background:#404040"></div>
<div class="a" style="left:637.6px;top:348.5px;width:13.6px;height:11px;background:#404040"></div>
<div class="a" style="left:652.8px;top:348.5px;width:13px;height:11px;background:#404040"></div>
<div class="a" style="left:667.4px;top:348.5px;width:16.2px;height:11px;background:#404040"></div>
<svg style="left:625.5px;top:350px" width="8" height="8" viewBox="0 0 8 8"><g fill="#d0d0d0"><circle cx="2.6" cy="1.7" r="1.6"/><circle cx="2.6" cy="6" r="1.9"/><path d="M4.4 3.4L7.6 5.6L4.4 6Z"/><rect x="1.2" y="3" width="3" height="1.4"/></g></svg>
<svg style="left:641px;top:350.8px" width="7" height="6" viewBox="0 0 7 6"><path d="M0.4 3.4 L3.6 0.4 H6.6 V3 L3.4 5.8Z" fill="#d0d0d0"/><circle cx="5.4" cy="1.6" r="0.6" fill="#454545"/></svg>
<svg style="left:656px;top:350.6px" width="7" height="7" viewBox="0 0 7 7"><path d="M3.5 0.2 L4.4 2.5 L6.8 2.6 L4.9 4.1 L5.6 6.6 L3.5 5.2 L1.4 6.6 L2.1 4.1 L0.2 2.6 L2.6 2.5Z" fill="#9a9a9a"/></svg>
<svg style="left:670px;top:351px" width="8" height="6" viewBox="0 0 8 6"><path d="M0.3 3 C2 0.4 6 0.4 7.7 3 C6 5.6 2 5.6 0.3 3Z" fill="none" stroke="#a8a8a8" stroke-width="0.7"/><circle cx="4" cy="3" r="1.2" fill="#a8a8a8"/><path d="M1 5.6L7 0.4" stroke="#a8a8a8" stroke-width="0.7"/></svg>
<div class="t" style="left:678.5px;top:350.8px;color:#c4c4c4">7</div>
<!-- tree icons -->
<svg style="left:3.5px;top:363.5px" width="3.6" height="3" viewBox="0 0 3.6 3"><path d="M0 0H3.6L1.8 3Z" fill="#7c7c7c"/></svg>
<svg style="left:11.1px;top:361.6px" width="6.4" height="6.2" viewBox="0 0 6.4 6.2"><path d="M3.2 0 L4.1 2.2 L6.4 2.3 L4.6 3.8 L5.2 6.1 L3.2 4.8 L1.2 6.1 L1.8 3.8 L0 2.3 L2.3 2.2Z" fill="#f2c617"/></svg>
<svg style="left:18.5px;top:370.8px" width="6.6" height="6.6" viewBox="0 0 6.6 6.6"><circle cx="2.6" cy="2.6" r="2" fill="none" stroke="#b4b4b4" stroke-width="0.8"/><path d="M4 4L6.2 6.2" stroke="#b4b4b4" stroke-width="0.9"/></svg>
<svg style="left:18.5px;top:379.8px" width="6.6" height="6.6" viewBox="0 0 6.6 6.6"><circle cx="2.6" cy="2.6" r="2" fill="none" stroke="#b4b4b4" stroke-width="0.8"/><path d="M4 4L6.2 6.2" stroke="#b4b4b4" stroke-width="0.9"/></svg>
<svg style="left:18.5px;top:388.8px" width="6.6" height="6.6" viewBox="0 0 6.6 6.6"><circle cx="2.6" cy="2.6" r="2" fill="none" stroke="#b4b4b4" stroke-width="0.8"/><path d="M4 4L6.2 6.2" stroke="#b4b4b4" stroke-width="0.9"/></svg>
<svg style="left:3.5px;top:408.2px" width="3.6" height="3" viewBox="0 0 3.6 3"><path d="M0 0H3.6L1.8 3Z" fill="#7c7c7c"/></svg>
<svg style="left:11.1px;top:407px" width="7.4" height="5.4" viewBox="0 0 7.4 5.4"><path d="M0 0H2.6L3.4 0.9H6.4V1.8H1.4L0 5.4Z" fill="#c8c8c8"/><path d="M1.6 2.2H7.4L6 5.4H0.2Z" fill="#d8d8d8"/></svg>
<svg style="left:12.2px;top:416.8px" width="3" height="3.8" viewBox="0 0 3 3.8"><path d="M0 0L3 1.9L0 3.8Z" fill="#7c7c7c"/></svg>
<svg style="left:18.5px;top:416.3px" width="6.8" height="5.2" viewBox="0 0 6.8 5.2"><path d="M0 0H2.6L3.4 0.9H6.8V5.2H0Z" fill="#c8c8c8"/></svg>
<svg style="left:4px;top:425.8px" width="3" height="3.8" viewBox="0 0 3 3.8"><path d="M0 0L3 1.9L0 3.8Z" fill="#7c7c7c"/></svg>
<svg style="left:11.1px;top:425.3px" width="6.8" height="5.2" viewBox="0 0 6.8 5.2"><path d="M0 0H2.6L3.4 0.9H6.8V5.2H0Z" fill="#c8c8c8"/></svg>

<!-- folder + doc -->
<svg style="left:120px;top:384.6px" width="28.4" height="23" viewBox="0 0 28.4 23"><path d="M1.6 0 H9.6 L12.6 3.6 H26.8 A1.6 1.6 0 0 1 28.4 5.2 V21.4 A1.6 1.6 0 0 1 26.8 23 H1.6 A1.6 1.6 0 0 1 0 21.4 V1.6 A1.6 1.6 0 0 1 1.6 0Z" fill="#c2c2c2"/></svg>
<svg style="left:163.8px;top:380px" width="27.2" height="32" viewBox="0 0 27.2 32"><path d="M2 0 H19.6 L27.2 7.6 V30 A2 2 0 0 1 25.2 32 H2 A2 2 0 0 1 0 30 V2 A2 2 0 0 1 2 0Z" fill="#e6e6e6"/><g stroke="#6f6f6f" stroke-width="1.3"><path d="M4.6 12.5H22M4.6 17H22M4.6 21.7H14.5"/></g></svg>
<div class="t" style="left:116.3px;top:416.4px;font-size:6px;letter-spacing:0.15px;-webkit-text-stroke:0;color:#c0c0c0">niwako-v0...</div>
<div class="t" style="left:161.6px;top:416.4px;font-size:6px;-webkit-text-stroke:0;color:#c0c0c0">Examples ...</div>

<div class="a" style="left:106px;top:368px;width:57px;height:68px;border:6px solid #f00;border-radius:12px"></div>
<!-- slider -->
<div class="a" style="left:646px;top:520.6px;width:31px;height:0.9px;background:#6a6a6a"></div>
<div class="a" style="left:661.5px;top:518.5px;width:5px;height:5px;border-radius:50%;background:#c8c8c8"></div>
<!-- status bar -->
<div class="t" style="left:757px;top:530.5px">Auto Generate Lighting Off</div>

<!-- window borders -->
<div class="a" style="left:0;top:0;width:1.2px;height:540px;background:#70a8d8"></div>
<div class="a" style="left:1.2px;top:45px;width:0.8px;height:493px;background:#221f1d"></div>
<div class="a" style="left:859.6px;top:45px;width:0.4px;height:493px;background:#2a2624"></div>
<div class="a" style="left:859.7px;top:0;width:1.3px;height:540px;background:rgba(0,120,215,0.55)"></div>
<div class="a" style="left:1.2px;top:538.6px;width:859px;height:1.4px;background:#1d5080"></div>

</body></html>
